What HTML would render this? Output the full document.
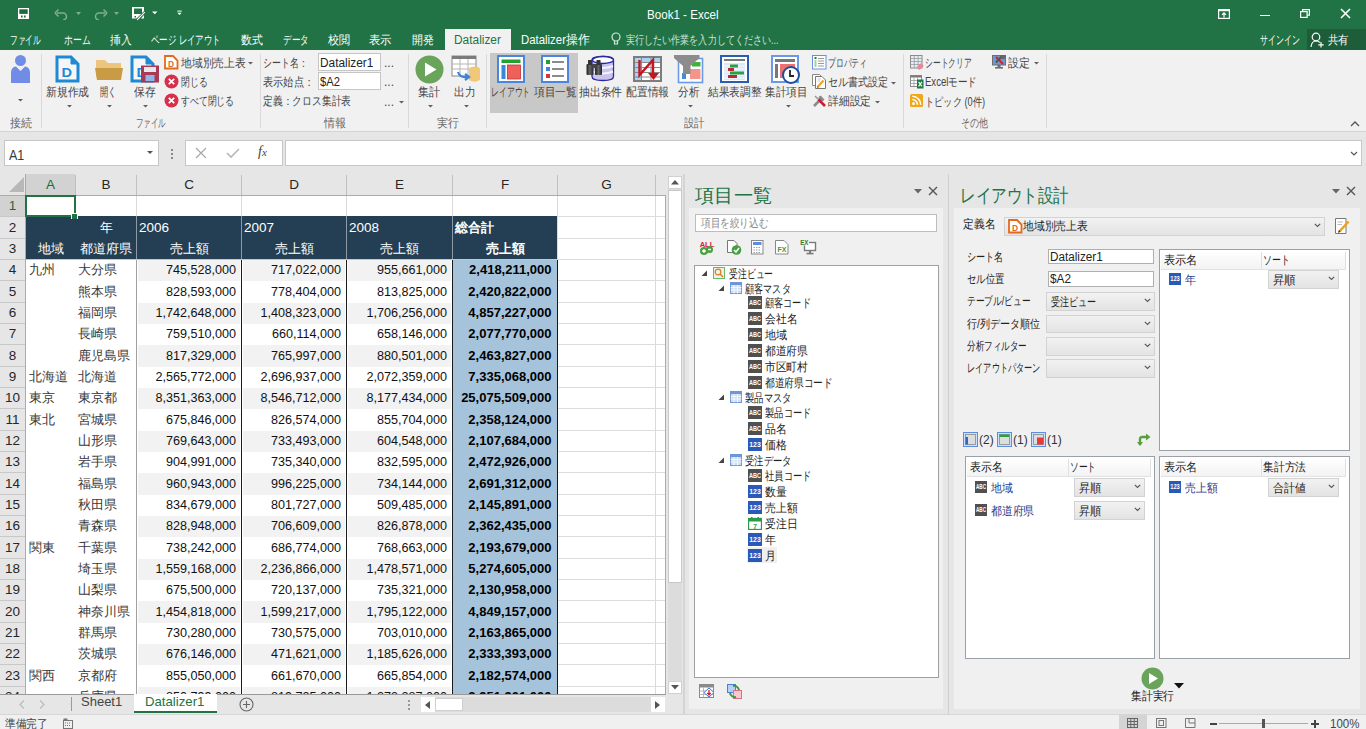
<!DOCTYPE html><html><head><meta charset="utf-8"><style>
html,body{margin:0;padding:0;width:1366px;height:729px;overflow:hidden;background:#f0f0f0;font-family:'Liberation Sans', sans-serif;}
.a{position:absolute;white-space:nowrap;}
</style></head><body>
<div class="a" style="left:0px;top:0px;width:1366px;height:50px;background:#217346"></div>
<svg class="a" style="left:17px;top:7px" width="13" height="13" viewBox="0 0 13 13"><rect x="1" y="1" width="11" height="11" fill="#fff"/><rect x="2.3" y="2.3" width="8.4" height="4.6" fill="#1d6b3d"/><rect x="4" y="8.5" width="1.6" height="2" fill="#1d6b3d"/><rect x="7" y="8.5" width="1.6" height="2" fill="#1d6b3d"/></svg>
<svg class="a" style="left:54px;top:8px" width="16" height="12" viewBox="0 0 16 12"><path d="M3 5 H9 A3.5 3.5 0 0 1 9 12" fill="none" stroke="#7fae91" stroke-width="1.5"/><path d="M1 5 L4.5 1.5 M1 5 L4.5 8.5" fill="none" stroke="#7fae91" stroke-width="1.5"/></svg>
<svg class="a" style="left:76px;top:12px" width="6" height="4" viewBox="0 0 6 4"><path d="M0 0 H5 L2.5 3z" fill="#7fae91"/></svg>
<svg class="a" style="left:92px;top:8px" width="16" height="12" viewBox="0 0 16 12"><path d="M13 5 H7 A3.5 3.5 0 0 0 7 12" fill="none" stroke="#7fae91" stroke-width="1.5"/><path d="M15 5 L11.5 1.5 M15 5 L11.5 8.5" fill="none" stroke="#7fae91" stroke-width="1.5"/></svg>
<svg class="a" style="left:114px;top:12px" width="6" height="4" viewBox="0 0 6 4"><path d="M0 0 H5 L2.5 3z" fill="#7fae91"/></svg>
<svg class="a" style="left:131px;top:6px" width="15" height="15" viewBox="0 0 15 15"><path d="M1 1 H13 V7 L8 12.5 H1 Z" fill="#fff"/><rect x="3" y="2.5" width="8" height="5.5" fill="#217346"/><rect x="3.5" y="10" width="1.5" height="1.5" fill="#217346"/><path d="M6 14 L14 6" stroke="#217346" stroke-width="2.6"/><path d="M6.2 13.8 L13.8 6.2" stroke="#fff" stroke-width="1.1"/><path d="M10 12.5 H13 V9" fill="#fff" stroke="#fff" stroke-width="0"/></svg>
<svg class="a" style="left:152px;top:11px" width="6" height="4" viewBox="0 0 6 4"><path d="M0 0.5 H5.5 L2.75 3.3z" fill="#fff"/></svg>
<svg class="a" style="left:177px;top:10px" width="5" height="6" viewBox="0 0 5 6"><rect x="0.3" y="0.6" width="4.4" height="1" fill="#fff"/><path d="M0.3 2.8 H4.7 L2.5 5z" fill="#fff"/></svg>
<div class="a" id="t1" style="left:646.5px;top:6.5px;line-height:16px;font-size:12.5px;color:#ffffff;font-weight:normal;transform:scaleX(0.9274);transform-origin:left center;">Book1 - Excel</div>
<svg class="a" style="left:1218px;top:9px" width="12" height="10" viewBox="0 0 12 10"><rect x="0.6" y="0.6" width="10.8" height="8.8" fill="none" stroke="#fff" stroke-width="1.2"/><rect x="0.6" y="0.6" width="10.8" height="1.6" fill="#fff"/><path d="M6 8.5 V4 M4 5.8 L6 3.8 L8 5.8" fill="none" stroke="#fff" stroke-width="1.2"/></svg>
<div class="a" style="left:1260px;top:14.5px;width:10px;height:1.5px;background:#fff"></div>
<svg class="a" style="left:1300px;top:9px" width="10" height="9" viewBox="0 0 10 9"><rect x="0.6" y="2.6" width="6.5" height="5.8" fill="none" stroke="#fff" stroke-width="1.2"/><path d="M2.6 2.6 V0.6 H9.4 V6.2 H7.1" fill="none" stroke="#fff" stroke-width="1.2"/></svg>
<svg class="a" style="left:1340px;top:8px" width="11" height="11" viewBox="0 0 11 11"><path d="M1 1 L10 10 M10 1 L1 10" stroke="#fff" stroke-width="1.6"/></svg>
<div class="a" id="t2" style="left:9.9px;top:32.0px;line-height:16px;font-size:12px;color:#ffffff;font-weight:normal;transform:scaleX(0.6383);transform-origin:left center;">ファイル</div>
<div class="a" id="t3" style="left:63.5px;top:32.0px;line-height:16px;font-size:12px;color:#ffffff;font-weight:normal;transform:scaleX(0.7343);transform-origin:left center;">ホーム</div>
<div class="a" id="t4" style="left:109.8px;top:32.0px;line-height:16px;font-size:12px;color:#ffffff;font-weight:normal;transform:scaleX(0.9000);transform-origin:left center;">挿入</div>
<div class="a" id="t5" style="left:151.0px;top:32.0px;line-height:16px;font-size:12px;color:#ffffff;font-weight:normal;transform:scaleX(0.7016);transform-origin:left center;">ページ レイアウト</div>
<div class="a" id="t6" style="left:240.5px;top:32.0px;line-height:16px;font-size:12px;color:#ffffff;font-weight:normal;transform:scaleX(0.9130);transform-origin:left center;">数式</div>
<div class="a" id="t7" style="left:282.5px;top:32.0px;line-height:16px;font-size:12px;color:#ffffff;font-weight:normal;transform:scaleX(0.7086);transform-origin:left center;">データ</div>
<div class="a" id="t8" style="left:327.5px;top:32.0px;line-height:16px;font-size:12px;color:#ffffff;font-weight:normal;transform:scaleX(0.9217);transform-origin:left center;">校閲</div>
<div class="a" id="t9" style="left:369.2px;top:32.0px;line-height:16px;font-size:12px;color:#ffffff;font-weight:normal;transform:scaleX(0.9391);transform-origin:left center;">表示</div>
<div class="a" id="t10" style="left:411.8px;top:32.0px;line-height:16px;font-size:12px;color:#ffffff;font-weight:normal;transform:scaleX(0.9174);transform-origin:left center;">開発</div>
<div class="a" style="left:445px;top:29px;width:66px;height:22px;background:#f1f1f1"></div>
<div class="a" id="t11" style="left:454px;top:32.0px;line-height:16px;font-size:12.5px;color:#217346;font-weight:normal;transform:scaleX(0.9518);transform-origin:left center;">Datalizer</div>
<div class="a" id="t12" style="left:521.2px;top:32.0px;line-height:16px;font-size:12.5px;color:#ffffff;font-weight:normal;transform:scaleX(0.9108);transform-origin:left center;">Datalizer操作</div>
<svg class="a" style="left:611px;top:32px" width="10" height="15" viewBox="0 0 10 15"><circle cx="5" cy="5" r="4" fill="none" stroke="#d8e6dd" stroke-width="1.2"/><path d="M3.5 9 V12 H6.5 V9" fill="none" stroke="#d8e6dd" stroke-width="1.2"/></svg>
<div class="a" id="t13" style="left:625.7px;top:32.0px;line-height:16px;font-size:12px;color:#cfe0d5;font-weight:normal;transform:scaleX(0.7552);transform-origin:left center;">実行したい作業を入力してください...</div>
<div class="a" id="t14" style="left:1259.5px;top:32.0px;line-height:16px;font-size:12px;color:#ffffff;font-weight:normal;transform:scaleX(0.6610);transform-origin:left center;">サインイン</div>
<div class="a" style="left:1307px;top:29px;width:59px;height:21px;background:#1d5d39"></div>
<svg class="a" style="left:1310px;top:32px" width="15" height="16" viewBox="0 0 15 16"><circle cx="6" cy="5" r="3.8" fill="none" stroke="#fff" stroke-width="1.2"/><path d="M1 15 C1.5 10.5 4 9 6 9 C8 9 9 9.5 10 10.5" fill="none" stroke="#fff" stroke-width="1.2"/><path d="M11 10 V15.5 M8.3 12.8 H13.7" stroke="#fff" stroke-width="1.2"/></svg>
<div class="a" id="t15" style="left:1327.5px;top:32.0px;line-height:16px;font-size:12px;color:#ffffff;font-weight:normal;transform:scaleX(0.8696);transform-origin:left center;">共有</div>
<div class="a" style="left:0px;top:50px;width:1366px;height:81px;background:#f1f1f1"></div>
<div class="a" style="left:0px;top:131px;width:1366px;height:1px;background:#d4d4d4"></div>
<div class="a" style="left:41px;top:54px;width:1px;height:74px;background:#dadada"></div>
<div class="a" style="left:260px;top:54px;width:1px;height:74px;background:#dadada"></div>
<div class="a" style="left:408px;top:54px;width:1px;height:74px;background:#dadada"></div>
<div class="a" style="left:486px;top:54px;width:1px;height:74px;background:#dadada"></div>
<div class="a" style="left:903px;top:54px;width:1px;height:74px;background:#dadada"></div>
<div class="a" style="left:1046px;top:54px;width:1px;height:74px;background:#dadada"></div>
<div class="a" id="t16" style="left:9.5px;top:116.0px;line-height:14px;font-size:11.5px;color:#666666;font-weight:normal;transform:scaleX(0.9174);transform-origin:left center;">接続</div>
<div class="a" id="t17" style="left:135.8px;top:116.0px;line-height:14px;font-size:11.5px;color:#666666;font-weight:normal;transform:scaleX(0.6213);transform-origin:left center;">ファイル</div>
<div class="a" id="t18" style="left:323.5px;top:116.0px;line-height:14px;font-size:11.5px;color:#666666;font-weight:normal;transform:scaleX(0.9217);transform-origin:left center;">情報</div>
<div class="a" id="t19" style="left:436.5px;top:116.0px;line-height:14px;font-size:11.5px;color:#666666;font-weight:normal;transform:scaleX(0.9087);transform-origin:left center;">実行</div>
<div class="a" id="t20" style="left:684.4px;top:116.0px;line-height:14px;font-size:11.5px;color:#666666;font-weight:normal;transform:scaleX(0.8696);transform-origin:left center;">設計</div>
<div class="a" id="t21" style="left:961.0px;top:116.0px;line-height:14px;font-size:11.5px;color:#666666;font-weight:normal;transform:scaleX(0.7514);transform-origin:left center;">その他</div>
<svg class="a" style="left:10px;top:54px" width="22" height="30" viewBox="0 0 22 30"><circle cx="10.5" cy="6.5" r="5.5" fill="#6f8de6"/><path d="M1 29 V19 Q1 13 6 12.5 L10.5 17 L15 12.5 Q20 13 20 19 V29 Z" fill="#6f8de6"/></svg>
<svg class="a" style="left:17.5px;top:98.5px" width="5" height="3" viewBox="0 0 5 3"><path d="M0 0 H5 L2.5 2.6z" fill="#606060"/></svg>
<svg class="a" style="left:55px;top:55px" width="25" height="28" viewBox="0 0 25 28"><path d="M2 2 H16 L23 9 V26 H2 Z" fill="#f6f6f6" stroke="#1e8ad6" stroke-width="3"/><path d="M16 2 V9 H23" fill="#1e8ad6" stroke="#1e8ad6" stroke-width="1"/><text x="6.5" y="21.5" textLength="10.5" lengthAdjust="spacingAndGlyphs" font-family="Liberation Sans" font-weight="bold" font-size="13" fill="#1e8ad6">D</text></svg>
<div class="a" id="t22" style="left:45.8px;top:85.4px;line-height:14px;font-size:12px;color:#444444;font-weight:normal;transform:scaleX(0.9000);transform-origin:left center;">新規作成</div>
<svg class="a" style="left:66.5px;top:104.5px" width="5" height="3" viewBox="0 0 5 3"><path d="M0 0 H5 L2.5 2.6z" fill="#606060"/></svg>
<svg class="a" style="left:95px;top:57px" width="28" height="24" viewBox="0 0 28 24"><path d="M1 3 H10 L13 6 H26 V20 H1 Z" fill="#ecc67e"/><path d="M0 11 H28 L26 23 H2 Z" fill="#c99b45"/></svg>
<div class="a" id="t23" style="left:100.1px;top:85.4px;line-height:14px;font-size:12px;color:#444444;font-weight:normal;transform:scaleX(0.6870);transform-origin:left center;">開く</div>
<svg class="a" style="left:106.5px;top:104.5px" width="5" height="3" viewBox="0 0 5 3"><path d="M0 0 H5 L2.5 2.6z" fill="#606060"/></svg>
<svg class="a" style="left:130px;top:55px" width="30" height="29" viewBox="0 0 30 29"><path d="M2 2 H16 L23 9 V26 H2 Z" fill="#f6f6f6" stroke="#1e8ad6" stroke-width="3"/><path d="M16 2 V9 H23" fill="#1e8ad6" stroke="#1e8ad6" stroke-width="1"/><text x="6.5" y="21.5" textLength="10.5" lengthAdjust="spacingAndGlyphs" font-family="Liberation Sans" font-weight="bold" font-size="13" fill="#1e8ad6">D</text><rect x="11" y="10.5" width="18" height="17" fill="#a83a55"/><rect x="14" y="12" width="12" height="5" fill="#e8e8e8"/><rect x="15.5" y="20" width="9" height="6" fill="#8fb4e8"/></svg>
<div class="a" id="t24" style="left:133.5px;top:85.4px;line-height:14px;font-size:12px;color:#444444;font-weight:normal;transform:scaleX(0.9000);transform-origin:left center;">保存</div>
<svg class="a" style="left:142.5px;top:104.5px" width="5" height="3" viewBox="0 0 5 3"><path d="M0 0 H5 L2.5 2.6z" fill="#606060"/></svg>
<svg class="a" style="left:164px;top:55px" width="15" height="15" viewBox="0 0 15 15"><path d="M1 1 H9 L13.5 5.5 V13.5 H1 Z" fill="#fff" stroke="#e06a1e" stroke-width="1.8"/><text x="7" y="11.5" text-anchor="middle" font-family="Liberation Sans" font-weight="bold" font-size="8.5" fill="#e06a1e">D</text></svg>
<div class="a" id="t25" style="left:180.5px;top:54.5px;line-height:16px;font-size:12px;color:#444444;font-weight:normal;transform:scaleX(0.8972);transform-origin:left center;">地域別売上表</div>
<svg class="a" style="left:247.5px;top:61.5px" width="5" height="3" viewBox="0 0 5 3"><path d="M0 0 H5 L2.5 2.6z" fill="#606060"/></svg>
<svg class="a" style="left:164px;top:74px" width="15" height="15" viewBox="0 0 15 15"><circle cx="7.5" cy="7.5" r="7" fill="#d8304a"/><path d="M4.8 4.8 L10.2 10.2 M10.2 4.8 L4.8 10.2" stroke="#fff" stroke-width="1.8"/></svg>
<div class="a" id="t26" style="left:180.5px;top:74.0px;line-height:16px;font-size:12px;color:#444444;font-weight:normal;transform:scaleX(0.7314);transform-origin:left center;">閉じる</div>
<svg class="a" style="left:164px;top:93px" width="15" height="15" viewBox="0 0 15 15"><circle cx="7.5" cy="7.5" r="7" fill="#d8304a"/><path d="M4.8 4.8 L10.2 10.2 M10.2 4.8 L4.8 10.2" stroke="#fff" stroke-width="1.8"/></svg>
<div class="a" id="t27" style="left:180.5px;top:93.0px;line-height:16px;font-size:12px;color:#444444;font-weight:normal;transform:scaleX(0.7366);transform-origin:left center;">すべて閉じる</div>
<div class="a" id="t28" style="left:263.2px;top:55.0px;line-height:16px;font-size:12px;color:#444444;font-weight:normal;transform:scaleX(0.7424);transform-origin:left center;">シート名：</div>
<div class="a" id="t29" style="left:263.2px;top:74.0px;line-height:16px;font-size:12px;color:#444444;font-weight:normal;transform:scaleX(0.8492);transform-origin:left center;">表示始点：</div>
<div class="a" id="t30" style="left:263.2px;top:93.0px;line-height:16px;font-size:12px;color:#444444;font-weight:normal;transform:scaleX(0.8159);transform-origin:left center;">定義：クロス集計表</div>
<div class="a" style="left:318px;top:53px;width:63px;height:18px;background:#fff;border:1px solid #c6c6c6;box-sizing:border-box"></div>
<div class="a" style="left:318px;top:72px;width:63px;height:18px;background:#fff;border:1px solid #c6c6c6;box-sizing:border-box"></div>
<div class="a" id="t31" style="left:319.9px;top:54.5px;line-height:16px;font-size:12.5px;color:#222;font-weight:normal;transform:scaleX(0.9479);transform-origin:left center;">Datalizer1</div>
<div class="a" id="t32" style="left:319.9px;top:73.5px;line-height:16px;font-size:12.5px;color:#222;font-weight:normal;transform:scaleX(0.8988);transform-origin:left center;">$A2</div>
<div class="a" id="t33" style="left:384px;top:57.0px;line-height:12px;font-size:12px;color:#444;font-weight:normal;">...</div>
<div class="a" id="t34" style="left:384px;top:76.0px;line-height:12px;font-size:12px;color:#444;font-weight:normal;">...</div>
<div class="a" id="t35" style="left:384px;top:96.0px;line-height:12px;font-size:12px;color:#444;font-weight:normal;">...</div>
<svg class="a" style="left:398.5px;top:100.5px" width="5" height="3" viewBox="0 0 5 3"><path d="M0 0 H5 L2.5 2.6z" fill="#606060"/></svg>
<svg class="a" style="left:415px;top:55px" width="29" height="29" viewBox="0 0 29 29"><circle cx="14.5" cy="14.5" r="14" fill="#6aa35a"/><path d="M10 7.5 L21.5 14.5 L10 21.5 Z" fill="#fff"/></svg>
<div class="a" id="t36" style="left:418.2px;top:85.4px;line-height:14px;font-size:12px;color:#444444;font-weight:normal;transform:scaleX(0.9348);transform-origin:left center;">集計</div>
<svg class="a" style="left:427.5px;top:104.5px" width="5" height="3" viewBox="0 0 5 3"><path d="M0 0 H5 L2.5 2.6z" fill="#606060"/></svg>
<svg class="a" style="left:451px;top:55px" width="30" height="29" viewBox="0 0 30 29"><rect x="1" y="1" width="24" height="20" fill="#fff" stroke="#8a8a8a" stroke-width="1"/><rect x="1" y="1" width="24" height="3" fill="#7a7a7a"/><path d="M1 9 H25 M1 14 H25 M9 4 V21 M17 4 V21" stroke="#b5b5b5" stroke-width="1"/><ellipse cx="23.5" cy="14" rx="5.5" ry="2.5" fill="#f0c878"/><path d="M18 14 V25 Q23.5 28.5 29 25 V14 Z" fill="#f0c878"/><path d="M7 17 Q9 23 16 22" fill="none" stroke="#3f84d2" stroke-width="2.2"/><path d="M14 19 L18 22 L14 25" fill="none" stroke="#3f84d2" stroke-width="2.2"/></svg>
<div class="a" id="t37" style="left:454.4px;top:85.4px;line-height:14px;font-size:12px;color:#444444;font-weight:normal;transform:scaleX(0.8913);transform-origin:left center;">出力</div>
<svg class="a" style="left:463.5px;top:104.5px" width="5" height="3" viewBox="0 0 5 3"><path d="M0 0 H5 L2.5 2.6z" fill="#606060"/></svg>
<div class="a" style="left:490px;top:53px;width:88px;height:60px;background:#c8c8c8"></div>
<svg class="a" style="left:497px;top:55px" width="28" height="28" viewBox="0 0 28 28"><rect x="1" y="1" width="26" height="26" fill="#fff" stroke="#4a86e0" stroke-width="2"/><rect x="4.5" y="4.5" width="19" height="3.5" fill="#22a031"/><rect x="4.5" y="10" width="4" height="14" fill="#3b86d8"/><rect x="10.5" y="10" width="13" height="14" fill="#f0605a"/><rect x="10.5" y="10" width="13" height="14" fill="none" stroke="#c23030" stroke-width="0.8"/></svg>
<div class="a" id="t38" style="left:490.5px;top:85.4px;line-height:14px;font-size:12px;color:#444444;font-weight:normal;transform:scaleX(0.6559);transform-origin:left center;">レイアウト</div>
<svg class="a" style="left:541px;top:55px" width="28" height="28" viewBox="0 0 28 28"><rect x="1" y="1" width="26" height="26" fill="#fff" stroke="#4a86e0" stroke-width="2"/><rect x="5" y="5" width="4" height="4" fill="#22a031"/><rect x="5" y="12" width="4" height="4" fill="#3b86d8"/><rect x="5" y="19" width="4" height="4" fill="#e0303a"/><path d="M11 7 H23 M11 14 H23 M11 21 H23" stroke="#666" stroke-width="1.4"/></svg>
<div class="a" id="t39" style="left:533.9px;top:85.4px;line-height:14px;font-size:12px;color:#444444;font-weight:normal;transform:scaleX(0.8915);transform-origin:left center;">項目一覧</div>
<svg class="a" style="left:584px;top:55px" width="31" height="28" viewBox="0 0 31 28"><defs><linearGradient id="bn" x1="0" x2="1"><stop offset="0" stop-color="#222"/><stop offset="0.5" stop-color="#666"/><stop offset="1" stop-color="#222"/></linearGradient></defs><path d="M8 5 Q8 1.5 19 1.5 Q29.5 1.5 29.5 5 V21.5 Q29.5 25.5 19 25.5 Q8 25.5 8 21.5 Z" fill="#c9c3ee" stroke="#2a2aa0" stroke-width="1.3"/><ellipse cx="19" cy="5" rx="10.5" ry="3.5" fill="#fff" stroke="#2a2aa0" stroke-width="1.3"/><path d="M8.5 11 Q19 15 29 11 M8.5 16.5 Q19 20.5 29 16.5" fill="none" stroke="#f4f2ff" stroke-width="2"/><rect x="2.5" y="9" width="7" height="11" rx="1" fill="url(#bn)"/><rect x="11" y="9" width="7" height="11" rx="1" fill="url(#bn)"/><rect x="4" y="5" width="4" height="5" fill="#333"/><rect x="12.5" y="5" width="4" height="5" fill="#333"/><rect x="8" y="9" width="4" height="4" fill="#444"/></svg>
<div class="a" id="t40" style="left:579.2px;top:85.4px;line-height:14px;font-size:12px;color:#444444;font-weight:normal;transform:scaleX(0.9000);transform-origin:left center;">抽出条件</div>
<svg class="a" style="left:633px;top:56px" width="29" height="26" viewBox="0 0 29 26"><rect x="1" y="1" width="27" height="24" fill="#fff" stroke="#7d7d7d" stroke-width="2"/><rect x="2" y="2" width="6" height="22" fill="#a8d4f4"/><rect x="2" y="2" width="25" height="4" fill="#a8d4f4"/><path d="M2 6.5 H27 M2 11.5 H27 M2 16.5 H27 M2 21 H27 M8.5 2 V24 M18 2 V24" stroke="#8a8a8a" stroke-width="1"/><path d="M6.5 4 V19 L20 4 V20" fill="none" stroke="#c8141e" stroke-width="2.4"/><path d="M15 17 L20.5 24 L26 17 Z" fill="#c8141e"/></svg>
<div class="a" id="t41" style="left:625.9px;top:85.4px;line-height:14px;font-size:12px;color:#444444;font-weight:normal;transform:scaleX(0.9000);transform-origin:left center;">配置情報</div>
<svg class="a" style="left:673px;top:54px" width="31" height="30" viewBox="0 0 31 30"><rect x="5.5" y="4.5" width="24" height="24" fill="#fff" stroke="#6a9ae6" stroke-width="1.6"/><rect x="17" y="15" width="10.5" height="10" fill="#f4948a"/><rect x="19" y="8" width="8.5" height="4.5" fill="#40b040"/><rect x="9" y="19" width="4" height="6" fill="#4a88d8"/><path d="M1 1 H26.5 V4 L17.5 12 V20 H10 V12 L1 4 Z" fill="#8c8c8c"/></svg>
<div class="a" id="t42" style="left:678.3px;top:85.4px;line-height:14px;font-size:12px;color:#444444;font-weight:normal;transform:scaleX(0.8870);transform-origin:left center;">分析</div>
<svg class="a" style="left:687.5px;top:104.5px" width="5" height="3" viewBox="0 0 5 3"><path d="M0 0 H5 L2.5 2.6z" fill="#606060"/></svg>
<svg class="a" style="left:720px;top:55px" width="29" height="28" viewBox="0 0 29 28"><rect x="1" y="1" width="27" height="26" fill="#fff" stroke="#2a5db0" stroke-width="2"/><rect x="4" y="4" width="21" height="2" fill="#777"/><rect x="4" y="8" width="21" height="17" fill="#dbe8f8"/><path d="M4 11 H25 M4 14 H25 M4 17 H25 M4 20 H25 M4 23 H25" stroke="#fff" stroke-width="0.8"/><rect x="10" y="9.5" width="8" height="3" fill="#2aa040"/><rect x="8" y="13" width="6" height="3" fill="#c0283a"/><rect x="10" y="16.5" width="14" height="3" fill="#2aa040"/><rect x="8" y="20" width="9" height="3" fill="#c0283a"/></svg>
<div class="a" id="t43" style="left:707.8px;top:85.4px;line-height:14px;font-size:12px;color:#444444;font-weight:normal;transform:scaleX(0.8864);transform-origin:left center;">結果表調整</div>
<svg class="a" style="left:771px;top:55px" width="30" height="29" viewBox="0 0 30 29"><rect x="1" y="1" width="26" height="26" fill="#fff" stroke="#6a9ae6" stroke-width="2"/><rect x="4" y="4" width="20" height="3" fill="#777"/><rect x="4" y="9" width="3" height="14" fill="#777"/><rect x="9" y="9" width="15" height="14" fill="#f07070"/><circle cx="20" cy="20" r="8" fill="#fff" stroke="#1f4e9c" stroke-width="2"/><path d="M19 15 V21 H23" fill="none" stroke="#222" stroke-width="1.8"/></svg>
<div class="a" id="t44" style="left:764.5px;top:85.4px;line-height:14px;font-size:12px;color:#444444;font-weight:normal;transform:scaleX(0.8872);transform-origin:left center;">集計項目</div>
<svg class="a" style="left:785.5px;top:104.5px" width="5" height="3" viewBox="0 0 5 3"><path d="M0 0 H5 L2.5 2.6z" fill="#606060"/></svg>
<svg class="a" style="left:812px;top:55px" width="15" height="15" viewBox="0 0 15 15"><rect x="0.5" y="0.5" width="13.5" height="13.5" fill="#fff" stroke="#6a8ee0" stroke-width="1"/><rect x="2.5" y="2" width="2" height="2" fill="#1a8a2a"/><rect x="2.5" y="5" width="2" height="7" fill="#a8d098"/><path d="M6 3.5 H12 M6 6 H12 M6 8.5 H12 M6 11 H12" stroke="#9a9a9a" stroke-width="1"/></svg>
<div class="a" id="t45" style="left:827.7px;top:54.5px;line-height:16px;font-size:12px;color:#444444;font-weight:normal;transform:scaleX(0.6508);transform-origin:left center;">プロパティ</div>
<svg class="a" style="left:812px;top:74px" width="15" height="16" viewBox="0 0 15 16"><path d="M0.5 0.5 H7.5 L9.5 2.5 V11.5 H0.5 Z" fill="#fff" stroke="#8a8a8a"/><path d="M3.5 2.5 H10 L13.5 6 V14.5 H3.5 Z" fill="#fff" stroke="#777"/><path d="M5.5 5 H9 M5.5 7 H8" stroke="#bbb" stroke-width="0.8"/><path d="M5.5 13 L11.5 6.5" stroke="#f4a020" stroke-width="2"/><path d="M5 13.8 L5.3 12 L6.8 13.3 Z" fill="#555"/></svg>
<div class="a" id="t46" style="left:827.7px;top:74.0px;line-height:16px;font-size:12px;color:#444444;font-weight:normal;transform:scaleX(0.8366);transform-origin:left center;">セル書式設定</div>
<svg class="a" style="left:890.5px;top:81.5px" width="5" height="3" viewBox="0 0 5 3"><path d="M0 0 H5 L2.5 2.6z" fill="#606060"/></svg>
<svg class="a" style="left:812px;top:93px" width="15" height="15" viewBox="0 0 15 15"><path d="M2 13 L10.5 4.5" stroke="#8a8a8a" stroke-width="2.6"/><path d="M9 2.5 A3 3 0 1 0 12.5 6 L11 5.5 L10 4.5 Z" fill="#8a8a8a"/><path d="M3 3 L6.5 6.5" stroke="#9a9a9a" stroke-width="1.6"/><path d="M6.5 6.5 L13 13" stroke="#c81e30" stroke-width="2.6"/></svg>
<div class="a" id="t47" style="left:827.7px;top:93.0px;line-height:16px;font-size:12px;color:#444444;font-weight:normal;transform:scaleX(0.9000);transform-origin:left center;">詳細設定</div>
<svg class="a" style="left:874.5px;top:100.5px" width="5" height="3" viewBox="0 0 5 3"><path d="M0 0 H5 L2.5 2.6z" fill="#606060"/></svg>
<svg class="a" style="left:910px;top:55px" width="14" height="15" viewBox="0 0 14 15"><rect x="0.5" y="0.5" width="11.5" height="12.5" fill="#e4eef8" stroke="#8a8a8a"/><path d="M0.5 3.5 H12 M0.5 6.5 H12 M0.5 9.5 H12 M4.3 0.5 V13 M8.1 0.5 V13" stroke="#9a9a9a" stroke-width="0.8"/><path d="M6.5 12.5 L11 8 L13.8 10.8 L9.3 15 Z" fill="#e8869a"/></svg>
<div class="a" id="t48" style="left:925.3px;top:54.9px;line-height:16px;font-size:12px;color:#444444;font-weight:normal;transform:scaleX(0.6465);transform-origin:left center;">シートクリア</div>
<svg class="a" style="left:910px;top:75px" width="15" height="14" viewBox="0 0 15 14"><rect x="0.5" y="0.5" width="11" height="11" fill="#fff" stroke="#8a8a8a"/><rect x="0.5" y="0.5" width="11" height="2" fill="#7a7a7a"/><path d="M0.5 5.5 H11.5 M0.5 8.5 H11.5 M4 2.5 V11.5 M7.5 2.5 V11.5" stroke="#9a9a9a" stroke-width="0.8"/><rect x="7" y="4.5" width="6.5" height="9" fill="#1e7a45"/><path d="M8.6 6.8 L11.9 11.3 M11.9 6.8 L8.6 11.3" stroke="#fff" stroke-width="1.1"/></svg>
<div class="a" id="t49" style="left:925.3px;top:73.6px;line-height:16px;font-size:12px;color:#444444;font-weight:normal;transform:scaleX(0.7957);transform-origin:left center;">Excelモード</div>
<svg class="a" style="left:910px;top:94px" width="13" height="13" viewBox="0 0 13 13"><rect x="0" y="0" width="13" height="13" rx="1.5" fill="#f0a818"/><circle cx="3.5" cy="9.5" r="1.5" fill="#fff"/><path d="M2.3 5.5 A5.2 5.2 0 0 1 7.5 10.7 M2.3 2.3 A8.4 8.4 0 0 1 10.7 10.7" fill="none" stroke="#fff" stroke-width="1.6"/></svg>
<div class="a" id="t50" style="left:925.3px;top:93.5px;line-height:16px;font-size:12px;color:#444444;font-weight:normal;transform:scaleX(0.7688);transform-origin:left center;">トピック (0件)</div>
<svg class="a" style="left:992px;top:55px" width="16" height="15" viewBox="0 0 16 15"><rect x="0.5" y="0.5" width="13" height="9.5" fill="#6a98d8" stroke="#6e6e6e"/><rect x="5.5" y="10" width="3" height="2" fill="#6e6e6e"/><rect x="3" y="12" width="8" height="1.6" fill="#6e6e6e"/><path d="M4 2 L11 9" stroke="#d82020" stroke-width="1.8"/><path d="M10 1 L4 7.5" stroke="#555" stroke-width="2"/><circle cx="11" cy="2" r="2.2" fill="#666"/></svg>
<div class="a" id="t51" style="left:1008.4px;top:54.9px;line-height:16px;font-size:12px;color:#444444;font-weight:normal;transform:scaleX(0.9174);transform-origin:left center;">設定</div>
<svg class="a" style="left:1033.5px;top:61.5px" width="5" height="3" viewBox="0 0 5 3"><path d="M0 0 H5 L2.5 2.6z" fill="#606060"/></svg>
<svg class="a" style="left:1349.5px;top:119.5px" width="10" height="7" viewBox="0 0 10 7"><path d="M1 6 L5 2 L9 6" fill="none" stroke="#555" stroke-width="1.3"/></svg>
<div class="a" style="left:0px;top:132px;width:1366px;height:42px;background:#e6e6e6"></div>
<div class="a" style="left:4px;top:140px;width:155px;height:26px;background:#fff;border:1px solid #c6c6c6;box-sizing:border-box"></div>
<div class="a" id="t52" style="left:9.3px;top:146.5px;line-height:16px;font-size:14px;color:#3a3a3a;font-weight:normal;transform:scaleX(0.8930);transform-origin:left center;">A1</div>
<svg class="a" style="left:147px;top:151px" width="6" height="4" viewBox="0 0 6 4"><path d="M0 0 H6 L3 3z" fill="#555"/></svg>
<div class="a" style="left:171px;top:149px;width:2px;height:2px;background:#888"></div>
<div class="a" style="left:171px;top:153px;width:2px;height:2px;background:#888"></div>
<div class="a" style="left:171px;top:157px;width:2px;height:2px;background:#888"></div>
<div class="a" style="left:185px;top:140px;width:98px;height:26px;background:#fff;border:1px solid #c6c6c6;box-sizing:border-box"></div>
<svg class="a" style="left:195px;top:147px" width="12" height="12" viewBox="0 0 12 12"><path d="M1 1 L11 11 M11 1 L1 11" stroke="#a8a8a8" stroke-width="1.2"/></svg>
<svg class="a" style="left:226px;top:147px" width="14" height="12" viewBox="0 0 14 12"><path d="M1 6 L5 10 L13 2" fill="none" stroke="#b8b8b8" stroke-width="1.6"/></svg>
<div class="a" style="left:258px;top:143px;line-height:18px;font-size:14px;font-family:'Liberation Serif',serif;font-style:italic;color:#444">f<span style="font-size:11px">x</span></div>
<div class="a" style="left:285px;top:140px;width:1077px;height:26px;background:#fff;border:1px solid #c6c6c6;box-sizing:border-box"></div>
<svg class="a" style="left:1350px;top:151px" width="8" height="5" viewBox="0 0 8 5"><path d="M1 1 L4 4 L7 1" fill="none" stroke="#555" stroke-width="1.2"/></svg>
<div class="a" style="left:0px;top:174px;width:684px;height:21px;background:#e6e6e6"></div>
<div class="a" style="left:0px;top:195px;width:25px;height:499px;background:#e6e6e6"></div>
<div class="a" style="left:26px;top:174px;width:49px;height:21px;background:#d2d2d2"></div>
<div class="a" style="left:0px;top:196px;width:25px;height:20px;background:#d2d2d2"></div>
<svg class="a" style="left:8px;top:176px" width="17" height="17" viewBox="0 0 17 17"><path d="M16 1 V16 H1 Z" fill="#b8b8b8"/></svg>
<div class="a" style="left:26px;top:196px;width:639px;height:498px;background:#fff"></div>
<div class="a" id="t53" style="left:20.5px;width:60px;text-align:center;top:176.5px;line-height:16px;font-size:13.5px;color:#1e6b3e;font-weight:normal;">A</div>
<div class="a" id="t54" style="left:76.0px;width:60px;text-align:center;top:176.5px;line-height:16px;font-size:13.5px;color:#262626;font-weight:normal;">B</div>
<div class="a" id="t55" style="left:159.0px;width:60px;text-align:center;top:176.5px;line-height:16px;font-size:13.5px;color:#262626;font-weight:normal;">C</div>
<div class="a" id="t56" style="left:264.0px;width:60px;text-align:center;top:176.5px;line-height:16px;font-size:13.5px;color:#262626;font-weight:normal;">D</div>
<div class="a" id="t57" style="left:369.5px;width:60px;text-align:center;top:176.5px;line-height:16px;font-size:13.5px;color:#262626;font-weight:normal;">E</div>
<div class="a" id="t58" style="left:475.0px;width:60px;text-align:center;top:176.5px;line-height:16px;font-size:13.5px;color:#262626;font-weight:normal;">F</div>
<div class="a" id="t59" style="left:576.5px;width:60px;text-align:center;top:176.5px;line-height:16px;font-size:13.5px;color:#262626;font-weight:normal;">G</div>
<div class="a" style="left:75px;top:175px;width:1px;height:20px;background:#c0c0c0"></div>
<div class="a" style="left:136px;top:175px;width:1px;height:20px;background:#c0c0c0"></div>
<div class="a" style="left:241px;top:175px;width:1px;height:20px;background:#c0c0c0"></div>
<div class="a" style="left:346px;top:175px;width:1px;height:20px;background:#c0c0c0"></div>
<div class="a" style="left:452px;top:175px;width:1px;height:20px;background:#c0c0c0"></div>
<div class="a" style="left:557px;top:175px;width:1px;height:20px;background:#c0c0c0"></div>
<div class="a" style="left:655px;top:175px;width:1px;height:20px;background:#c0c0c0"></div>
<div class="a" style="left:0px;top:195px;width:666px;height:1px;background:#ababab"></div>
<div class="a" style="left:25px;top:174px;width:1px;height:520px;background:#ababab"></div>
<div class="a" style="left:26px;top:216px;width:639px;height:1px;background:#dcdcdc"></div>
<div class="a" style="left:0px;top:216px;width:25px;height:1px;background:#c8c8c8"></div>
<div class="a" style="left:26px;top:238px;width:639px;height:1px;background:#dcdcdc"></div>
<div class="a" style="left:0px;top:238px;width:25px;height:1px;background:#c8c8c8"></div>
<div class="a" style="left:26px;top:259px;width:639px;height:1px;background:#dcdcdc"></div>
<div class="a" style="left:0px;top:259px;width:25px;height:1px;background:#c8c8c8"></div>
<div class="a" style="left:26px;top:280px;width:639px;height:1px;background:#dcdcdc"></div>
<div class="a" style="left:0px;top:280px;width:25px;height:1px;background:#c8c8c8"></div>
<div class="a" style="left:26px;top:302px;width:639px;height:1px;background:#dcdcdc"></div>
<div class="a" style="left:0px;top:302px;width:25px;height:1px;background:#c8c8c8"></div>
<div class="a" style="left:26px;top:323px;width:639px;height:1px;background:#dcdcdc"></div>
<div class="a" style="left:0px;top:323px;width:25px;height:1px;background:#c8c8c8"></div>
<div class="a" style="left:26px;top:344px;width:639px;height:1px;background:#dcdcdc"></div>
<div class="a" style="left:0px;top:344px;width:25px;height:1px;background:#c8c8c8"></div>
<div class="a" style="left:26px;top:366px;width:639px;height:1px;background:#dcdcdc"></div>
<div class="a" style="left:0px;top:366px;width:25px;height:1px;background:#c8c8c8"></div>
<div class="a" style="left:26px;top:387px;width:639px;height:1px;background:#dcdcdc"></div>
<div class="a" style="left:0px;top:387px;width:25px;height:1px;background:#c8c8c8"></div>
<div class="a" style="left:26px;top:408px;width:639px;height:1px;background:#dcdcdc"></div>
<div class="a" style="left:0px;top:408px;width:25px;height:1px;background:#c8c8c8"></div>
<div class="a" style="left:26px;top:430px;width:639px;height:1px;background:#dcdcdc"></div>
<div class="a" style="left:0px;top:430px;width:25px;height:1px;background:#c8c8c8"></div>
<div class="a" style="left:26px;top:451px;width:639px;height:1px;background:#dcdcdc"></div>
<div class="a" style="left:0px;top:451px;width:25px;height:1px;background:#c8c8c8"></div>
<div class="a" style="left:26px;top:472px;width:639px;height:1px;background:#dcdcdc"></div>
<div class="a" style="left:0px;top:472px;width:25px;height:1px;background:#c8c8c8"></div>
<div class="a" style="left:26px;top:494px;width:639px;height:1px;background:#dcdcdc"></div>
<div class="a" style="left:0px;top:494px;width:25px;height:1px;background:#c8c8c8"></div>
<div class="a" style="left:26px;top:515px;width:639px;height:1px;background:#dcdcdc"></div>
<div class="a" style="left:0px;top:515px;width:25px;height:1px;background:#c8c8c8"></div>
<div class="a" style="left:26px;top:536px;width:639px;height:1px;background:#dcdcdc"></div>
<div class="a" style="left:0px;top:536px;width:25px;height:1px;background:#c8c8c8"></div>
<div class="a" style="left:26px;top:558px;width:639px;height:1px;background:#dcdcdc"></div>
<div class="a" style="left:0px;top:558px;width:25px;height:1px;background:#c8c8c8"></div>
<div class="a" style="left:26px;top:579px;width:639px;height:1px;background:#dcdcdc"></div>
<div class="a" style="left:0px;top:579px;width:25px;height:1px;background:#c8c8c8"></div>
<div class="a" style="left:26px;top:600px;width:639px;height:1px;background:#dcdcdc"></div>
<div class="a" style="left:0px;top:600px;width:25px;height:1px;background:#c8c8c8"></div>
<div class="a" style="left:26px;top:622px;width:639px;height:1px;background:#dcdcdc"></div>
<div class="a" style="left:0px;top:622px;width:25px;height:1px;background:#c8c8c8"></div>
<div class="a" style="left:26px;top:643px;width:639px;height:1px;background:#dcdcdc"></div>
<div class="a" style="left:0px;top:643px;width:25px;height:1px;background:#c8c8c8"></div>
<div class="a" style="left:26px;top:664px;width:639px;height:1px;background:#dcdcdc"></div>
<div class="a" style="left:0px;top:664px;width:25px;height:1px;background:#c8c8c8"></div>
<div class="a" style="left:26px;top:686px;width:639px;height:1px;background:#dcdcdc"></div>
<div class="a" style="left:0px;top:686px;width:25px;height:1px;background:#c8c8c8"></div>
<div class="a" style="left:75px;top:196px;width:1px;height:498px;background:#dadada"></div>
<div class="a" style="left:136px;top:196px;width:1px;height:498px;background:#dadada"></div>
<div class="a" style="left:241px;top:196px;width:1px;height:498px;background:#dadada"></div>
<div class="a" style="left:346px;top:196px;width:1px;height:498px;background:#dadada"></div>
<div class="a" style="left:452px;top:196px;width:1px;height:498px;background:#dadada"></div>
<div class="a" style="left:557px;top:196px;width:1px;height:498px;background:#dadada"></div>
<div class="a" style="left:655px;top:196px;width:1px;height:498px;background:#dadada"></div>
<div class="a" id="t60" style="left:-0.5px;width:26px;text-align:center;top:198.0px;line-height:16px;font-size:13.5px;color:#1e6b3e;font-weight:normal;">1</div>
<div class="a" id="t61" style="left:-0.5px;width:26px;text-align:center;top:219.5px;line-height:16px;font-size:13.5px;color:#262626;font-weight:normal;">2</div>
<div class="a" id="t62" style="left:-0.5px;width:26px;text-align:center;top:241.0px;line-height:16px;font-size:13.5px;color:#262626;font-weight:normal;">3</div>
<div class="a" id="t63" style="left:-0.5px;width:26px;text-align:center;top:262.0px;line-height:16px;font-size:13.5px;color:#262626;font-weight:normal;">4</div>
<div class="a" id="t64" style="left:-0.5px;width:26px;text-align:center;top:283.5px;line-height:16px;font-size:13.5px;color:#262626;font-weight:normal;">5</div>
<div class="a" id="t65" style="left:-0.5px;width:26px;text-align:center;top:305.0px;line-height:16px;font-size:13.5px;color:#262626;font-weight:normal;">6</div>
<div class="a" id="t66" style="left:-0.5px;width:26px;text-align:center;top:326.0px;line-height:16px;font-size:13.5px;color:#262626;font-weight:normal;">7</div>
<div class="a" id="t67" style="left:-0.5px;width:26px;text-align:center;top:347.5px;line-height:16px;font-size:13.5px;color:#262626;font-weight:normal;">8</div>
<div class="a" id="t68" style="left:-0.5px;width:26px;text-align:center;top:369.0px;line-height:16px;font-size:13.5px;color:#262626;font-weight:normal;">9</div>
<div class="a" id="t69" style="left:-0.5px;width:26px;text-align:center;top:390.0px;line-height:16px;font-size:13.5px;color:#262626;font-weight:normal;">10</div>
<div class="a" id="t70" style="left:-0.5px;width:26px;text-align:center;top:411.5px;line-height:16px;font-size:13.5px;color:#262626;font-weight:normal;">11</div>
<div class="a" id="t71" style="left:-0.5px;width:26px;text-align:center;top:433.0px;line-height:16px;font-size:13.5px;color:#262626;font-weight:normal;">12</div>
<div class="a" id="t72" style="left:-0.5px;width:26px;text-align:center;top:454.0px;line-height:16px;font-size:13.5px;color:#262626;font-weight:normal;">13</div>
<div class="a" id="t73" style="left:-0.5px;width:26px;text-align:center;top:475.5px;line-height:16px;font-size:13.5px;color:#262626;font-weight:normal;">14</div>
<div class="a" id="t74" style="left:-0.5px;width:26px;text-align:center;top:497.0px;line-height:16px;font-size:13.5px;color:#262626;font-weight:normal;">15</div>
<div class="a" id="t75" style="left:-0.5px;width:26px;text-align:center;top:518.0px;line-height:16px;font-size:13.5px;color:#262626;font-weight:normal;">16</div>
<div class="a" id="t76" style="left:-0.5px;width:26px;text-align:center;top:539.5px;line-height:16px;font-size:13.5px;color:#262626;font-weight:normal;">17</div>
<div class="a" id="t77" style="left:-0.5px;width:26px;text-align:center;top:561.0px;line-height:16px;font-size:13.5px;color:#262626;font-weight:normal;">18</div>
<div class="a" id="t78" style="left:-0.5px;width:26px;text-align:center;top:582.0px;line-height:16px;font-size:13.5px;color:#262626;font-weight:normal;">19</div>
<div class="a" id="t79" style="left:-0.5px;width:26px;text-align:center;top:603.5px;line-height:16px;font-size:13.5px;color:#262626;font-weight:normal;">20</div>
<div class="a" id="t80" style="left:-0.5px;width:26px;text-align:center;top:625.0px;line-height:16px;font-size:13.5px;color:#262626;font-weight:normal;">21</div>
<div class="a" id="t81" style="left:-0.5px;width:26px;text-align:center;top:646.0px;line-height:16px;font-size:13.5px;color:#262626;font-weight:normal;">22</div>
<div class="a" id="t82" style="left:-0.5px;width:26px;text-align:center;top:667.5px;line-height:16px;font-size:13.5px;color:#262626;font-weight:normal;">23</div>
<div class="a" id="t83" style="left:-0.5px;width:26px;text-align:center;top:689.0px;line-height:16px;font-size:13.5px;color:#262626;font-weight:normal;">24</div>
<div class="a" style="left:26px;top:216px;width:531px;height:43px;background:#243f53"></div>
<div class="a" style="left:453px;top:260px;width:104px;height:434px;background:#a6c3dc"></div>
<div class="a" style="left:26px;top:260px;width:427px;height:434px;background:#fff"></div>
<div class="a" style="left:138px;top:260px;width:102px;height:21px;background:#f2f2f2"></div>
<div class="a" style="left:243px;top:260px;width:102px;height:21px;background:#f2f2f2"></div>
<div class="a" style="left:348px;top:260px;width:103px;height:21px;background:#f2f2f2"></div>
<div class="a" style="left:138px;top:303px;width:102px;height:21px;background:#f2f2f2"></div>
<div class="a" style="left:243px;top:303px;width:102px;height:21px;background:#f2f2f2"></div>
<div class="a" style="left:348px;top:303px;width:103px;height:21px;background:#f2f2f2"></div>
<div class="a" style="left:138px;top:345px;width:102px;height:22px;background:#f2f2f2"></div>
<div class="a" style="left:243px;top:345px;width:102px;height:22px;background:#f2f2f2"></div>
<div class="a" style="left:348px;top:345px;width:103px;height:22px;background:#f2f2f2"></div>
<div class="a" style="left:138px;top:388px;width:102px;height:21px;background:#f2f2f2"></div>
<div class="a" style="left:243px;top:388px;width:102px;height:21px;background:#f2f2f2"></div>
<div class="a" style="left:348px;top:388px;width:103px;height:21px;background:#f2f2f2"></div>
<div class="a" style="left:138px;top:431px;width:102px;height:21px;background:#f2f2f2"></div>
<div class="a" style="left:243px;top:431px;width:102px;height:21px;background:#f2f2f2"></div>
<div class="a" style="left:348px;top:431px;width:103px;height:21px;background:#f2f2f2"></div>
<div class="a" style="left:138px;top:473px;width:102px;height:22px;background:#f2f2f2"></div>
<div class="a" style="left:243px;top:473px;width:102px;height:22px;background:#f2f2f2"></div>
<div class="a" style="left:348px;top:473px;width:103px;height:22px;background:#f2f2f2"></div>
<div class="a" style="left:138px;top:516px;width:102px;height:21px;background:#f2f2f2"></div>
<div class="a" style="left:243px;top:516px;width:102px;height:21px;background:#f2f2f2"></div>
<div class="a" style="left:348px;top:516px;width:103px;height:21px;background:#f2f2f2"></div>
<div class="a" style="left:138px;top:559px;width:102px;height:21px;background:#f2f2f2"></div>
<div class="a" style="left:243px;top:559px;width:102px;height:21px;background:#f2f2f2"></div>
<div class="a" style="left:348px;top:559px;width:103px;height:21px;background:#f2f2f2"></div>
<div class="a" style="left:138px;top:601px;width:102px;height:22px;background:#f2f2f2"></div>
<div class="a" style="left:243px;top:601px;width:102px;height:22px;background:#f2f2f2"></div>
<div class="a" style="left:348px;top:601px;width:103px;height:22px;background:#f2f2f2"></div>
<div class="a" style="left:138px;top:644px;width:102px;height:21px;background:#f2f2f2"></div>
<div class="a" style="left:243px;top:644px;width:102px;height:21px;background:#f2f2f2"></div>
<div class="a" style="left:348px;top:644px;width:103px;height:21px;background:#f2f2f2"></div>
<div class="a" style="left:138px;top:687px;width:102px;height:8px;background:#f2f2f2"></div>
<div class="a" style="left:243px;top:687px;width:102px;height:8px;background:#f2f2f2"></div>
<div class="a" style="left:348px;top:687px;width:103px;height:8px;background:#f2f2f2"></div>
<div class="a" style="left:136px;top:216px;width:1px;height:43px;background:#8d9aa5"></div>
<div class="a" style="left:241px;top:216px;width:1px;height:43px;background:#8d9aa5"></div>
<div class="a" style="left:346px;top:216px;width:1px;height:43px;background:#8d9aa5"></div>
<div class="a" style="left:452px;top:216px;width:1px;height:43px;background:#8d9aa5"></div>
<div class="a" style="left:241px;top:260px;width:1px;height:434px;background:#1a1a1a"></div>
<div class="a" style="left:346px;top:260px;width:1px;height:434px;background:#1a1a1a"></div>
<div class="a" style="left:452px;top:260px;width:1px;height:434px;background:#1a1a1a"></div>
<div class="a" style="left:557px;top:260px;width:1px;height:434px;background:#1a1a1a"></div>
<div class="a" style="left:557px;top:216px;width:1px;height:44px;background:#dadada"></div>
<div class="a" style="left:136px;top:260px;width:1px;height:434px;background:#a0a0a0"></div>
<div class="a" style="left:26px;top:259px;width:531px;height:1px;background:#c8c8c8"></div>
<div class="a" id="t84" style="left:-87px;width:200px;text-align:right;top:219.5px;line-height:16px;font-size:12.7px;color:#fff;font-weight:normal;">年</div>
<div class="a" id="t85" style="left:139px;top:219.5px;line-height:16px;font-size:13.5px;color:#fff;font-weight:normal;">2006</div>
<div class="a" id="t86" style="left:244px;top:219.5px;line-height:16px;font-size:13.5px;color:#fff;font-weight:normal;">2007</div>
<div class="a" id="t87" style="left:349px;top:219.5px;line-height:16px;font-size:13.5px;color:#fff;font-weight:normal;">2008</div>
<div class="a" id="t88" style="left:455px;top:219.5px;line-height:16px;font-size:12.7px;color:#fff;font-weight:bold;">総合計</div>
<div class="a" id="t89" style="left:26.0px;width:50px;text-align:center;top:241.0px;line-height:16px;font-size:12.7px;color:#fff;font-weight:normal;">地域</div>
<div class="a" id="t90" style="left:76.0px;width:60px;text-align:center;top:241.0px;line-height:16px;font-size:12.7px;color:#fff;font-weight:normal;">都道府県</div>
<div class="a" id="t91" style="left:139.0px;width:100px;text-align:center;top:241.0px;line-height:16px;font-size:12.7px;color:#fff;font-weight:normal;">売上額</div>
<div class="a" id="t92" style="left:244.0px;width:100px;text-align:center;top:241.0px;line-height:16px;font-size:12.7px;color:#fff;font-weight:normal;">売上額</div>
<div class="a" id="t93" style="left:349.0px;width:100px;text-align:center;top:241.0px;line-height:16px;font-size:12.7px;color:#fff;font-weight:normal;">売上額</div>
<div class="a" id="t94" style="left:455.0px;width:100px;text-align:center;top:241.0px;line-height:16px;font-size:12.7px;color:#fff;font-weight:bold;">売上額</div>
<div class="a" id="t95" style="left:28.5px;top:262.0px;line-height:16px;font-size:12.7px;color:#383838;font-weight:normal;">九州</div>
<div class="a" id="t96" style="left:77.5px;top:262.0px;line-height:16px;font-size:12.7px;color:#383838;font-weight:normal;">大分県</div>
<div class="a" id="t97" style="left:36px;width:200px;text-align:right;top:262.0px;line-height:16px;font-size:12.6px;color:#111;font-weight:normal;">745,528,000</div>
<div class="a" id="t98" style="left:141px;width:200px;text-align:right;top:262.0px;line-height:16px;font-size:12.6px;color:#111;font-weight:normal;">717,022,000</div>
<div class="a" id="t99" style="left:247px;width:200px;text-align:right;top:262.0px;line-height:16px;font-size:12.6px;color:#111;font-weight:normal;">955,661,000</div>
<div class="a" id="t100" style="left:351.5px;width:200px;text-align:right;top:262.0px;line-height:16px;font-size:13px;color:#000;font-weight:bold;">2,418,211,000</div>
<div class="a" id="t101" style="left:77.5px;top:283.5px;line-height:16px;font-size:12.7px;color:#383838;font-weight:normal;">熊本県</div>
<div class="a" id="t102" style="left:36px;width:200px;text-align:right;top:283.5px;line-height:16px;font-size:12.6px;color:#111;font-weight:normal;">828,593,000</div>
<div class="a" id="t103" style="left:141px;width:200px;text-align:right;top:283.5px;line-height:16px;font-size:12.6px;color:#111;font-weight:normal;">778,404,000</div>
<div class="a" id="t104" style="left:247px;width:200px;text-align:right;top:283.5px;line-height:16px;font-size:12.6px;color:#111;font-weight:normal;">813,825,000</div>
<div class="a" id="t105" style="left:351.5px;width:200px;text-align:right;top:283.5px;line-height:16px;font-size:13px;color:#000;font-weight:bold;">2,420,822,000</div>
<div class="a" id="t106" style="left:77.5px;top:305.0px;line-height:16px;font-size:12.7px;color:#383838;font-weight:normal;">福岡県</div>
<div class="a" id="t107" style="left:36px;width:200px;text-align:right;top:305.0px;line-height:16px;font-size:12.6px;color:#111;font-weight:normal;">1,742,648,000</div>
<div class="a" id="t108" style="left:141px;width:200px;text-align:right;top:305.0px;line-height:16px;font-size:12.6px;color:#111;font-weight:normal;">1,408,323,000</div>
<div class="a" id="t109" style="left:247px;width:200px;text-align:right;top:305.0px;line-height:16px;font-size:12.6px;color:#111;font-weight:normal;">1,706,256,000</div>
<div class="a" id="t110" style="left:351.5px;width:200px;text-align:right;top:305.0px;line-height:16px;font-size:13px;color:#000;font-weight:bold;">4,857,227,000</div>
<div class="a" id="t111" style="left:77.5px;top:326.0px;line-height:16px;font-size:12.7px;color:#383838;font-weight:normal;">長崎県</div>
<div class="a" id="t112" style="left:36px;width:200px;text-align:right;top:326.0px;line-height:16px;font-size:12.6px;color:#111;font-weight:normal;">759,510,000</div>
<div class="a" id="t113" style="left:141px;width:200px;text-align:right;top:326.0px;line-height:16px;font-size:12.6px;color:#111;font-weight:normal;">660,114,000</div>
<div class="a" id="t114" style="left:247px;width:200px;text-align:right;top:326.0px;line-height:16px;font-size:12.6px;color:#111;font-weight:normal;">658,146,000</div>
<div class="a" id="t115" style="left:351.5px;width:200px;text-align:right;top:326.0px;line-height:16px;font-size:13px;color:#000;font-weight:bold;">2,077,770,000</div>
<div class="a" id="t116" style="left:77.5px;top:347.5px;line-height:16px;font-size:12.7px;color:#383838;font-weight:normal;">鹿児島県</div>
<div class="a" id="t117" style="left:36px;width:200px;text-align:right;top:347.5px;line-height:16px;font-size:12.6px;color:#111;font-weight:normal;">817,329,000</div>
<div class="a" id="t118" style="left:141px;width:200px;text-align:right;top:347.5px;line-height:16px;font-size:12.6px;color:#111;font-weight:normal;">765,997,000</div>
<div class="a" id="t119" style="left:247px;width:200px;text-align:right;top:347.5px;line-height:16px;font-size:12.6px;color:#111;font-weight:normal;">880,501,000</div>
<div class="a" id="t120" style="left:351.5px;width:200px;text-align:right;top:347.5px;line-height:16px;font-size:13px;color:#000;font-weight:bold;">2,463,827,000</div>
<div class="a" id="t121" style="left:28.5px;top:369.0px;line-height:16px;font-size:12.7px;color:#383838;font-weight:normal;">北海道</div>
<div class="a" id="t122" style="left:77.5px;top:369.0px;line-height:16px;font-size:12.7px;color:#383838;font-weight:normal;">北海道</div>
<div class="a" id="t123" style="left:36px;width:200px;text-align:right;top:369.0px;line-height:16px;font-size:12.6px;color:#111;font-weight:normal;">2,565,772,000</div>
<div class="a" id="t124" style="left:141px;width:200px;text-align:right;top:369.0px;line-height:16px;font-size:12.6px;color:#111;font-weight:normal;">2,696,937,000</div>
<div class="a" id="t125" style="left:247px;width:200px;text-align:right;top:369.0px;line-height:16px;font-size:12.6px;color:#111;font-weight:normal;">2,072,359,000</div>
<div class="a" id="t126" style="left:351.5px;width:200px;text-align:right;top:369.0px;line-height:16px;font-size:13px;color:#000;font-weight:bold;">7,335,068,000</div>
<div class="a" id="t127" style="left:28.5px;top:390.0px;line-height:16px;font-size:12.7px;color:#383838;font-weight:normal;">東京</div>
<div class="a" id="t128" style="left:77.5px;top:390.0px;line-height:16px;font-size:12.7px;color:#383838;font-weight:normal;">東京都</div>
<div class="a" id="t129" style="left:36px;width:200px;text-align:right;top:390.0px;line-height:16px;font-size:12.6px;color:#111;font-weight:normal;">8,351,363,000</div>
<div class="a" id="t130" style="left:141px;width:200px;text-align:right;top:390.0px;line-height:16px;font-size:12.6px;color:#111;font-weight:normal;">8,546,712,000</div>
<div class="a" id="t131" style="left:247px;width:200px;text-align:right;top:390.0px;line-height:16px;font-size:12.6px;color:#111;font-weight:normal;">8,177,434,000</div>
<div class="a" id="t132" style="left:351.5px;width:200px;text-align:right;top:390.0px;line-height:16px;font-size:13px;color:#000;font-weight:bold;">25,075,509,000</div>
<div class="a" id="t133" style="left:28.5px;top:411.5px;line-height:16px;font-size:12.7px;color:#383838;font-weight:normal;">東北</div>
<div class="a" id="t134" style="left:77.5px;top:411.5px;line-height:16px;font-size:12.7px;color:#383838;font-weight:normal;">宮城県</div>
<div class="a" id="t135" style="left:36px;width:200px;text-align:right;top:411.5px;line-height:16px;font-size:12.6px;color:#111;font-weight:normal;">675,846,000</div>
<div class="a" id="t136" style="left:141px;width:200px;text-align:right;top:411.5px;line-height:16px;font-size:12.6px;color:#111;font-weight:normal;">826,574,000</div>
<div class="a" id="t137" style="left:247px;width:200px;text-align:right;top:411.5px;line-height:16px;font-size:12.6px;color:#111;font-weight:normal;">855,704,000</div>
<div class="a" id="t138" style="left:351.5px;width:200px;text-align:right;top:411.5px;line-height:16px;font-size:13px;color:#000;font-weight:bold;">2,358,124,000</div>
<div class="a" id="t139" style="left:77.5px;top:433.0px;line-height:16px;font-size:12.7px;color:#383838;font-weight:normal;">山形県</div>
<div class="a" id="t140" style="left:36px;width:200px;text-align:right;top:433.0px;line-height:16px;font-size:12.6px;color:#111;font-weight:normal;">769,643,000</div>
<div class="a" id="t141" style="left:141px;width:200px;text-align:right;top:433.0px;line-height:16px;font-size:12.6px;color:#111;font-weight:normal;">733,493,000</div>
<div class="a" id="t142" style="left:247px;width:200px;text-align:right;top:433.0px;line-height:16px;font-size:12.6px;color:#111;font-weight:normal;">604,548,000</div>
<div class="a" id="t143" style="left:351.5px;width:200px;text-align:right;top:433.0px;line-height:16px;font-size:13px;color:#000;font-weight:bold;">2,107,684,000</div>
<div class="a" id="t144" style="left:77.5px;top:454.0px;line-height:16px;font-size:12.7px;color:#383838;font-weight:normal;">岩手県</div>
<div class="a" id="t145" style="left:36px;width:200px;text-align:right;top:454.0px;line-height:16px;font-size:12.6px;color:#111;font-weight:normal;">904,991,000</div>
<div class="a" id="t146" style="left:141px;width:200px;text-align:right;top:454.0px;line-height:16px;font-size:12.6px;color:#111;font-weight:normal;">735,340,000</div>
<div class="a" id="t147" style="left:247px;width:200px;text-align:right;top:454.0px;line-height:16px;font-size:12.6px;color:#111;font-weight:normal;">832,595,000</div>
<div class="a" id="t148" style="left:351.5px;width:200px;text-align:right;top:454.0px;line-height:16px;font-size:13px;color:#000;font-weight:bold;">2,472,926,000</div>
<div class="a" id="t149" style="left:77.5px;top:475.5px;line-height:16px;font-size:12.7px;color:#383838;font-weight:normal;">福島県</div>
<div class="a" id="t150" style="left:36px;width:200px;text-align:right;top:475.5px;line-height:16px;font-size:12.6px;color:#111;font-weight:normal;">960,943,000</div>
<div class="a" id="t151" style="left:141px;width:200px;text-align:right;top:475.5px;line-height:16px;font-size:12.6px;color:#111;font-weight:normal;">996,225,000</div>
<div class="a" id="t152" style="left:247px;width:200px;text-align:right;top:475.5px;line-height:16px;font-size:12.6px;color:#111;font-weight:normal;">734,144,000</div>
<div class="a" id="t153" style="left:351.5px;width:200px;text-align:right;top:475.5px;line-height:16px;font-size:13px;color:#000;font-weight:bold;">2,691,312,000</div>
<div class="a" id="t154" style="left:77.5px;top:497.0px;line-height:16px;font-size:12.7px;color:#383838;font-weight:normal;">秋田県</div>
<div class="a" id="t155" style="left:36px;width:200px;text-align:right;top:497.0px;line-height:16px;font-size:12.6px;color:#111;font-weight:normal;">834,679,000</div>
<div class="a" id="t156" style="left:141px;width:200px;text-align:right;top:497.0px;line-height:16px;font-size:12.6px;color:#111;font-weight:normal;">801,727,000</div>
<div class="a" id="t157" style="left:247px;width:200px;text-align:right;top:497.0px;line-height:16px;font-size:12.6px;color:#111;font-weight:normal;">509,485,000</div>
<div class="a" id="t158" style="left:351.5px;width:200px;text-align:right;top:497.0px;line-height:16px;font-size:13px;color:#000;font-weight:bold;">2,145,891,000</div>
<div class="a" id="t159" style="left:77.5px;top:518.0px;line-height:16px;font-size:12.7px;color:#383838;font-weight:normal;">青森県</div>
<div class="a" id="t160" style="left:36px;width:200px;text-align:right;top:518.0px;line-height:16px;font-size:12.6px;color:#111;font-weight:normal;">828,948,000</div>
<div class="a" id="t161" style="left:141px;width:200px;text-align:right;top:518.0px;line-height:16px;font-size:12.6px;color:#111;font-weight:normal;">706,609,000</div>
<div class="a" id="t162" style="left:247px;width:200px;text-align:right;top:518.0px;line-height:16px;font-size:12.6px;color:#111;font-weight:normal;">826,878,000</div>
<div class="a" id="t163" style="left:351.5px;width:200px;text-align:right;top:518.0px;line-height:16px;font-size:13px;color:#000;font-weight:bold;">2,362,435,000</div>
<div class="a" id="t164" style="left:28.5px;top:539.5px;line-height:16px;font-size:12.7px;color:#383838;font-weight:normal;">関東</div>
<div class="a" id="t165" style="left:77.5px;top:539.5px;line-height:16px;font-size:12.7px;color:#383838;font-weight:normal;">千葉県</div>
<div class="a" id="t166" style="left:36px;width:200px;text-align:right;top:539.5px;line-height:16px;font-size:12.6px;color:#111;font-weight:normal;">738,242,000</div>
<div class="a" id="t167" style="left:141px;width:200px;text-align:right;top:539.5px;line-height:16px;font-size:12.6px;color:#111;font-weight:normal;">686,774,000</div>
<div class="a" id="t168" style="left:247px;width:200px;text-align:right;top:539.5px;line-height:16px;font-size:12.6px;color:#111;font-weight:normal;">768,663,000</div>
<div class="a" id="t169" style="left:351.5px;width:200px;text-align:right;top:539.5px;line-height:16px;font-size:13px;color:#000;font-weight:bold;">2,193,679,000</div>
<div class="a" id="t170" style="left:77.5px;top:561.0px;line-height:16px;font-size:12.7px;color:#383838;font-weight:normal;">埼玉県</div>
<div class="a" id="t171" style="left:36px;width:200px;text-align:right;top:561.0px;line-height:16px;font-size:12.6px;color:#111;font-weight:normal;">1,559,168,000</div>
<div class="a" id="t172" style="left:141px;width:200px;text-align:right;top:561.0px;line-height:16px;font-size:12.6px;color:#111;font-weight:normal;">2,236,866,000</div>
<div class="a" id="t173" style="left:247px;width:200px;text-align:right;top:561.0px;line-height:16px;font-size:12.6px;color:#111;font-weight:normal;">1,478,571,000</div>
<div class="a" id="t174" style="left:351.5px;width:200px;text-align:right;top:561.0px;line-height:16px;font-size:13px;color:#000;font-weight:bold;">5,274,605,000</div>
<div class="a" id="t175" style="left:77.5px;top:582.0px;line-height:16px;font-size:12.7px;color:#383838;font-weight:normal;">山梨県</div>
<div class="a" id="t176" style="left:36px;width:200px;text-align:right;top:582.0px;line-height:16px;font-size:12.6px;color:#111;font-weight:normal;">675,500,000</div>
<div class="a" id="t177" style="left:141px;width:200px;text-align:right;top:582.0px;line-height:16px;font-size:12.6px;color:#111;font-weight:normal;">720,137,000</div>
<div class="a" id="t178" style="left:247px;width:200px;text-align:right;top:582.0px;line-height:16px;font-size:12.6px;color:#111;font-weight:normal;">735,321,000</div>
<div class="a" id="t179" style="left:351.5px;width:200px;text-align:right;top:582.0px;line-height:16px;font-size:13px;color:#000;font-weight:bold;">2,130,958,000</div>
<div class="a" id="t180" style="left:77.5px;top:603.5px;line-height:16px;font-size:12.7px;color:#383838;font-weight:normal;">神奈川県</div>
<div class="a" id="t181" style="left:36px;width:200px;text-align:right;top:603.5px;line-height:16px;font-size:12.6px;color:#111;font-weight:normal;">1,454,818,000</div>
<div class="a" id="t182" style="left:141px;width:200px;text-align:right;top:603.5px;line-height:16px;font-size:12.6px;color:#111;font-weight:normal;">1,599,217,000</div>
<div class="a" id="t183" style="left:247px;width:200px;text-align:right;top:603.5px;line-height:16px;font-size:12.6px;color:#111;font-weight:normal;">1,795,122,000</div>
<div class="a" id="t184" style="left:351.5px;width:200px;text-align:right;top:603.5px;line-height:16px;font-size:13px;color:#000;font-weight:bold;">4,849,157,000</div>
<div class="a" id="t185" style="left:77.5px;top:625.0px;line-height:16px;font-size:12.7px;color:#383838;font-weight:normal;">群馬県</div>
<div class="a" id="t186" style="left:36px;width:200px;text-align:right;top:625.0px;line-height:16px;font-size:12.6px;color:#111;font-weight:normal;">730,280,000</div>
<div class="a" id="t187" style="left:141px;width:200px;text-align:right;top:625.0px;line-height:16px;font-size:12.6px;color:#111;font-weight:normal;">730,575,000</div>
<div class="a" id="t188" style="left:247px;width:200px;text-align:right;top:625.0px;line-height:16px;font-size:12.6px;color:#111;font-weight:normal;">703,010,000</div>
<div class="a" id="t189" style="left:351.5px;width:200px;text-align:right;top:625.0px;line-height:16px;font-size:13px;color:#000;font-weight:bold;">2,163,865,000</div>
<div class="a" id="t190" style="left:77.5px;top:646.0px;line-height:16px;font-size:12.7px;color:#383838;font-weight:normal;">茨城県</div>
<div class="a" id="t191" style="left:36px;width:200px;text-align:right;top:646.0px;line-height:16px;font-size:12.6px;color:#111;font-weight:normal;">676,146,000</div>
<div class="a" id="t192" style="left:141px;width:200px;text-align:right;top:646.0px;line-height:16px;font-size:12.6px;color:#111;font-weight:normal;">471,621,000</div>
<div class="a" id="t193" style="left:247px;width:200px;text-align:right;top:646.0px;line-height:16px;font-size:12.6px;color:#111;font-weight:normal;">1,185,626,000</div>
<div class="a" id="t194" style="left:351.5px;width:200px;text-align:right;top:646.0px;line-height:16px;font-size:13px;color:#000;font-weight:bold;">2,333,393,000</div>
<div class="a" id="t195" style="left:28.5px;top:667.5px;line-height:16px;font-size:12.7px;color:#383838;font-weight:normal;">関西</div>
<div class="a" id="t196" style="left:77.5px;top:667.5px;line-height:16px;font-size:12.7px;color:#383838;font-weight:normal;">京都府</div>
<div class="a" id="t197" style="left:36px;width:200px;text-align:right;top:667.5px;line-height:16px;font-size:12.6px;color:#111;font-weight:normal;">855,050,000</div>
<div class="a" id="t198" style="left:141px;width:200px;text-align:right;top:667.5px;line-height:16px;font-size:12.6px;color:#111;font-weight:normal;">661,670,000</div>
<div class="a" id="t199" style="left:247px;width:200px;text-align:right;top:667.5px;line-height:16px;font-size:12.6px;color:#111;font-weight:normal;">665,854,000</div>
<div class="a" id="t200" style="left:351.5px;width:200px;text-align:right;top:667.5px;line-height:16px;font-size:13px;color:#000;font-weight:bold;">2,182,574,000</div>
<div class="a" id="t201" style="left:77.5px;top:689.0px;line-height:16px;font-size:12.7px;color:#383838;font-weight:normal;">兵庫県</div>
<div class="a" id="t202" style="left:36px;width:200px;text-align:right;top:689.0px;line-height:16px;font-size:12.6px;color:#111;font-weight:normal;">850,799,000</div>
<div class="a" id="t203" style="left:141px;width:200px;text-align:right;top:689.0px;line-height:16px;font-size:12.6px;color:#111;font-weight:normal;">819,725,000</div>
<div class="a" id="t204" style="left:247px;width:200px;text-align:right;top:689.0px;line-height:16px;font-size:12.6px;color:#111;font-weight:normal;">1,273,287,000</div>
<div class="a" id="t205" style="left:351.5px;width:200px;text-align:right;top:689.0px;line-height:16px;font-size:13px;color:#000;font-weight:bold;">2,951,901,000</div>
<div class="a" style="left:25px;top:195px;width:51px;height:22px;border:2px solid #217346;box-sizing:border-box"></div>
<div class="a" style="left:71px;top:213px;width:7px;height:6px;background:#fff"></div>
<div class="a" style="left:72px;top:214px;width:5px;height:5px;background:#217346"></div>
<div class="a" style="left:665px;top:196px;width:1px;height:498px;background:#ababab"></div>
<div class="a" style="left:0px;top:695px;width:684px;height:19px;background:#e6e6e6"></div>
<div class="a" style="left:0px;top:694px;width:666px;height:1px;background:#9a9a9a"></div>
<svg class="a" style="left:19px;top:700px" width="6" height="9" viewBox="0 0 6 9"><path d="M5 0.5 L1 4.5 L5 8.5" fill="none" stroke="#bcbcbc" stroke-width="1.2"/></svg>
<svg class="a" style="left:39px;top:700px" width="6" height="9" viewBox="0 0 6 9"><path d="M1 0.5 L5 4.5 L1 8.5" fill="none" stroke="#bcbcbc" stroke-width="1.2"/></svg>
<div class="a" style="left:71px;top:697px;width:1px;height:14px;background:#9a9a9a"></div>
<div class="a" id="t206" style="left:81px;top:694.0px;line-height:16px;font-size:13px;color:#444;font-weight:normal;">Sheet1</div>
<div class="a" style="left:134px;top:694px;width:83px;height:17px;background:#fff"></div>
<div class="a" style="left:134px;top:711px;width:83px;height:2px;background:#217346"></div>
<div class="a" id="t207" style="left:145px;top:694.0px;line-height:16px;font-size:13px;color:#217346;font-weight:normal;transform:scaleX(1.0151);transform-origin:left center;">Datalizer1</div>
<svg class="a" style="left:239px;top:697px" width="15" height="15" viewBox="0 0 15 15"><circle cx="7.5" cy="7.5" r="6.5" fill="none" stroke="#666" stroke-width="1.1"/><path d="M7.5 4 V11 M4 7.5 H11" stroke="#666" stroke-width="1.1"/></svg>
<div class="a" style="left:408px;top:700px;width:2px;height:2px;background:#999"></div>
<div class="a" style="left:408px;top:704px;width:2px;height:2px;background:#999"></div>
<div class="a" style="left:408px;top:708px;width:2px;height:2px;background:#999"></div>
<div class="a" style="left:421px;top:697px;width:244px;height:15px;background:#dcdcdc"></div>
<div class="a" style="left:421px;top:697px;width:14px;height:15px;background:#fff"></div>
<svg class="a" style="left:425px;top:701px" width="6" height="8" viewBox="0 0 6 8"><path d="M5 0 V8 L0 4 Z" fill="#555"/></svg>
<div class="a" style="left:435px;top:698px;width:28px;height:13px;background:#fff;border:1px solid #cfcfcf;box-sizing:border-box"></div>
<div class="a" style="left:651px;top:697px;width:14px;height:15px;background:#fff"></div>
<svg class="a" style="left:655px;top:701px" width="6" height="8" viewBox="0 0 6 8"><path d="M0 0 V8 L5 4 Z" fill="#555"/></svg>
<div class="a" style="left:666px;top:174px;width:18px;height:540px;background:#e6e6e6"></div>
<div class="a" style="left:668px;top:176px;width:14px;height:518px;background:#dcdcdc"></div>
<div class="a" style="left:668px;top:176px;width:14px;height:13px;background:#fff;border:1px solid #d0d0d0;box-sizing:border-box"></div>
<svg class="a" style="left:671px;top:180px" width="8" height="5" viewBox="0 0 8 5"><path d="M0 4.5 H8 L4 0 Z" fill="#555"/></svg>
<div class="a" style="left:668px;top:190px;width:14px;height:393px;background:#fff;border:1px solid #c8c8c8;box-sizing:border-box"></div>
<div class="a" style="left:668px;top:681px;width:14px;height:13px;background:#fff;border:1px solid #d0d0d0;box-sizing:border-box"></div>
<svg class="a" style="left:671px;top:685px" width="8" height="5" viewBox="0 0 8 5"><path d="M0 0 H8 L4 4.5 Z" fill="#555"/></svg>
<div class="a" style="left:683px;top:174px;width:2px;height:540px;background:#d4d4d4"></div>
<div class="a" style="left:685px;top:174px;width:264px;height:540px;background:#e6e6e6"></div>
<div class="a" style="left:948px;top:174px;width:1px;height:540px;background:#cfcfcf"></div>
<div class="a" id="t208" style="left:695px;top:184.0px;line-height:24px;font-size:19px;color:#217346;font-weight:normal;transform:scaleX(1.0133);transform-origin:left center;">項目一覧</div>
<svg class="a" style="left:914px;top:189px" width="8" height="5" viewBox="0 0 8 5"><path d="M0 0 H8 L4 4.5 Z" fill="#666"/></svg>
<svg class="a" style="left:928px;top:186px" width="10" height="10" viewBox="0 0 10 10"><path d="M1 1 L9 9 M9 1 L1 9" stroke="#555" stroke-width="1.4"/></svg>
<div class="a" style="left:689px;top:208px;width:254px;height:501px;background:#f0f0f0"></div>
<div class="a" style="left:695px;top:214px;width:242px;height:18px;background:#fff;border:1px solid #bdbdbd;box-sizing:border-box"></div>
<div class="a" id="t209" style="left:701px;top:216.0px;line-height:14px;font-size:11.5px;color:#8a8a8a;font-weight:normal;transform:scaleX(0.7988);transform-origin:left center;">項目を絞り込む</div>
<svg class="a" style="left:699px;top:240px" width="16" height="15" viewBox="0 0 16 15"><text x="8" y="7" text-anchor="middle" font-family="Liberation Sans" font-weight="bold" font-size="7.5" fill="#d8202a">ALL</text><circle cx="5" cy="11" r="4" fill="#4aa040"/><circle cx="10.5" cy="9.5" r="3.5" fill="#4aa040"/><path d="M3 11 H7 M5 9 V13 M9 9.5 H12" stroke="#fff" stroke-width="1.3"/></svg>
<svg class="a" style="left:727px;top:240px" width="15" height="15" viewBox="0 0 15 15"><path d="M0.5 0.5 H7 L10 3.5 V12.5 H0.5 Z" fill="#fff" stroke="#777" stroke-width="1"/><circle cx="9.5" cy="10" r="4.8" fill="#45a045"/><path d="M7 10 L9 12 L12 8" fill="none" stroke="#fff" stroke-width="1.5"/></svg>
<svg class="a" style="left:751px;top:240px" width="13" height="15" viewBox="0 0 13 15"><rect x="0.5" y="0.5" width="11.5" height="13.5" fill="#fff" stroke="#888"/><rect x="2" y="2" width="8.5" height="3" fill="#5b8ee0"/><path d="M2.5 7.5 H10 M2.5 10 H10 M2.5 12.5 H10" stroke="#999" stroke-width="0.9" stroke-dasharray="1.5 1"/></svg>
<svg class="a" style="left:775px;top:240px" width="14" height="15" viewBox="0 0 14 15"><path d="M0.5 0.5 H9 L13 4.5 V14 H0.5 Z" fill="#fff" stroke="#888"/><text x="7" y="11.5" text-anchor="middle" font-family="Liberation Sans" font-weight="bold" font-size="7" fill="#3a9a3a">FX</text></svg>
<svg class="a" style="left:800px;top:239px" width="17" height="16" viewBox="0 0 17 16"><rect x="4.5" y="3.5" width="11" height="8" fill="#fff" stroke="#7a7a7a" stroke-width="1.4"/><rect x="0" y="0" width="9" height="6.5" fill="#f0f0f0"/><text x="0.3" y="6" textLength="8" lengthAdjust="spacingAndGlyphs" font-family="Liberation Sans" font-weight="bold" font-size="7" fill="#2a7a3a">EX</text><rect x="9" y="11.5" width="2" height="2.5" fill="#7a7a7a"/><rect x="6.5" y="13.8" width="7" height="1.6" fill="#7a7a7a"/></svg>
<div class="a" style="left:694px;top:265px;width:245px;height:413px;background:#fff;border:1px solid #a0a0a0;box-sizing:border-box"></div>
<div class="a" style="left:747px;top:547px;width:30px;height:16px;background:#efefef"></div>
<svg class="a" style="left:701px;top:270px" width="7" height="7" viewBox="0 0 7 7"><path d="M6 0.5 V6 H0.5 Z" fill="#444"/></svg>
<svg class="a" style="left:713px;top:267px" width="12" height="12" viewBox="0 0 12 12"><rect x="0.5" y="0.5" width="11" height="11" fill="#e8f4e8" stroke="#6ab86a"/><circle cx="5" cy="5" r="2.8" fill="none" stroke="#e07a20" stroke-width="1.2"/><path d="M7 7 L10 10" stroke="#e07a20" stroke-width="1.4"/></svg>
<div class="a" id="t210" style="left:728.5px;top:266.5px;line-height:14px;font-size:12px;color:#222;font-weight:normal;transform:scaleX(0.7390);transform-origin:left center;">受注ビュー</div>
<svg class="a" style="left:718px;top:285px" width="7" height="7" viewBox="0 0 7 7"><path d="M6 0.5 V6 H0.5 Z" fill="#444"/></svg>
<svg class="a" style="left:730px;top:282px" width="12" height="12" viewBox="0 0 12 12"><rect x="0.5" y="0.5" width="11" height="11" fill="#cfe0f6" stroke="#6d96d6"/><rect x="0.5" y="0.5" width="11" height="2.5" fill="#6d96d6"/><path d="M0.5 5.5 H11.5 M0.5 8 H11.5 M4 3 V11.5 M7.5 3 V11.5" stroke="#fff" stroke-width="0.7"/></svg>
<div class="a" id="t211" style="left:744.8px;top:281.5px;line-height:14px;font-size:12px;color:#222;font-weight:normal;transform:scaleX(0.7627);transform-origin:left center;">顧客マスタ</div>
<svg class="a" style="left:748px;top:296px" width="14" height="13" viewBox="0 0 14 13"><rect x="0" y="0" width="14" height="13" fill="#505050"/><text x="1" y="8.8" textLength="12" lengthAdjust="spacingAndGlyphs" font-family="Liberation Sans" font-weight="bold" font-size="6.5" fill="#fff">ABC</text></svg>
<div class="a" id="t212" style="left:765.4px;top:295.5px;line-height:14px;font-size:12px;color:#222;font-weight:normal;transform:scaleX(0.7627);transform-origin:left center;">顧客コード</div>
<svg class="a" style="left:748px;top:312px" width="14" height="13" viewBox="0 0 14 13"><rect x="0" y="0" width="14" height="13" fill="#505050"/><text x="1" y="8.8" textLength="12" lengthAdjust="spacingAndGlyphs" font-family="Liberation Sans" font-weight="bold" font-size="6.5" fill="#fff">ABC</text></svg>
<div class="a" id="t213" style="left:765.4px;top:311.5px;line-height:14px;font-size:12px;color:#222;font-weight:normal;transform:scaleX(0.9000);transform-origin:left center;">会社名</div>
<svg class="a" style="left:748px;top:328px" width="14" height="13" viewBox="0 0 14 13"><rect x="0" y="0" width="14" height="13" fill="#505050"/><text x="1" y="8.8" textLength="12" lengthAdjust="spacingAndGlyphs" font-family="Liberation Sans" font-weight="bold" font-size="6.5" fill="#fff">ABC</text></svg>
<div class="a" id="t214" style="left:765.4px;top:327.5px;line-height:14px;font-size:12px;color:#222;font-weight:normal;transform:scaleX(0.9304);transform-origin:left center;">地域</div>
<svg class="a" style="left:748px;top:344px" width="14" height="13" viewBox="0 0 14 13"><rect x="0" y="0" width="14" height="13" fill="#505050"/><text x="1" y="8.8" textLength="12" lengthAdjust="spacingAndGlyphs" font-family="Liberation Sans" font-weight="bold" font-size="6.5" fill="#fff">ABC</text></svg>
<div class="a" id="t215" style="left:765.4px;top:343.5px;line-height:14px;font-size:12px;color:#222;font-weight:normal;transform:scaleX(0.8936);transform-origin:left center;">都道府県</div>
<svg class="a" style="left:748px;top:360px" width="14" height="13" viewBox="0 0 14 13"><rect x="0" y="0" width="14" height="13" fill="#505050"/><text x="1" y="8.8" textLength="12" lengthAdjust="spacingAndGlyphs" font-family="Liberation Sans" font-weight="bold" font-size="6.5" fill="#fff">ABC</text></svg>
<div class="a" id="t216" style="left:765.4px;top:359.5px;line-height:14px;font-size:12px;color:#222;font-weight:normal;transform:scaleX(0.8936);transform-origin:left center;">市区町村</div>
<svg class="a" style="left:748px;top:376px" width="14" height="13" viewBox="0 0 14 13"><rect x="0" y="0" width="14" height="13" fill="#505050"/><text x="1" y="8.8" textLength="12" lengthAdjust="spacingAndGlyphs" font-family="Liberation Sans" font-weight="bold" font-size="6.5" fill="#fff">ABC</text></svg>
<div class="a" id="t217" style="left:765.4px;top:375.5px;line-height:14px;font-size:12px;color:#222;font-weight:normal;transform:scaleX(0.8072);transform-origin:left center;">都道府県コード</div>
<svg class="a" style="left:718px;top:394px" width="7" height="7" viewBox="0 0 7 7"><path d="M6 0.5 V6 H0.5 Z" fill="#444"/></svg>
<svg class="a" style="left:730px;top:391px" width="12" height="12" viewBox="0 0 12 12"><rect x="0.5" y="0.5" width="11" height="11" fill="#cfe0f6" stroke="#6d96d6"/><rect x="0.5" y="0.5" width="11" height="2.5" fill="#6d96d6"/><path d="M0.5 5.5 H11.5 M0.5 8 H11.5 M4 3 V11.5 M7.5 3 V11.5" stroke="#fff" stroke-width="0.7"/></svg>
<div class="a" id="t218" style="left:744.8px;top:390.5px;line-height:14px;font-size:12px;color:#222;font-weight:normal;transform:scaleX(0.7797);transform-origin:left center;">製品マスタ</div>
<svg class="a" style="left:748px;top:406px" width="14" height="13" viewBox="0 0 14 13"><rect x="0" y="0" width="14" height="13" fill="#505050"/><text x="1" y="8.8" textLength="12" lengthAdjust="spacingAndGlyphs" font-family="Liberation Sans" font-weight="bold" font-size="6.5" fill="#fff">ABC</text></svg>
<div class="a" id="t219" style="left:765.4px;top:405.5px;line-height:14px;font-size:12px;color:#222;font-weight:normal;transform:scaleX(0.7729);transform-origin:left center;">製品コード</div>
<svg class="a" style="left:748px;top:422px" width="14" height="13" viewBox="0 0 14 13"><rect x="0" y="0" width="14" height="13" fill="#505050"/><text x="1" y="8.8" textLength="12" lengthAdjust="spacingAndGlyphs" font-family="Liberation Sans" font-weight="bold" font-size="6.5" fill="#fff">ABC</text></svg>
<div class="a" id="t220" style="left:765.4px;top:421.5px;line-height:14px;font-size:12px;color:#222;font-weight:normal;transform:scaleX(0.9130);transform-origin:left center;">品名</div>
<svg class="a" style="left:748px;top:438px" width="14" height="13" viewBox="0 0 14 13"><rect x="0" y="0" width="14" height="13" fill="#2a5ab8"/><text x="1.2" y="8.9" textLength="11.6" lengthAdjust="spacingAndGlyphs" font-family="Liberation Sans" font-weight="bold" font-size="7" fill="#fff">123</text></svg>
<div class="a" id="t221" style="left:765.4px;top:437.5px;line-height:14px;font-size:12px;color:#222;font-weight:normal;transform:scaleX(0.9130);transform-origin:left center;">価格</div>
<svg class="a" style="left:718px;top:457px" width="7" height="7" viewBox="0 0 7 7"><path d="M6 0.5 V6 H0.5 Z" fill="#444"/></svg>
<svg class="a" style="left:730px;top:454px" width="12" height="12" viewBox="0 0 12 12"><rect x="0.5" y="0.5" width="11" height="11" fill="#cfe0f6" stroke="#6d96d6"/><rect x="0.5" y="0.5" width="11" height="2.5" fill="#6d96d6"/><path d="M0.5 5.5 H11.5 M0.5 8 H11.5 M4 3 V11.5 M7.5 3 V11.5" stroke="#fff" stroke-width="0.7"/></svg>
<div class="a" id="t222" style="left:744.8px;top:453.5px;line-height:14px;font-size:12px;color:#222;font-weight:normal;transform:scaleX(0.7797);transform-origin:left center;">受注データ</div>
<svg class="a" style="left:748px;top:469px" width="14" height="13" viewBox="0 0 14 13"><rect x="0" y="0" width="14" height="13" fill="#505050"/><text x="1" y="8.8" textLength="12" lengthAdjust="spacingAndGlyphs" font-family="Liberation Sans" font-weight="bold" font-size="6.5" fill="#fff">ABC</text></svg>
<div class="a" id="t223" style="left:765.4px;top:468.5px;line-height:14px;font-size:12px;color:#222;font-weight:normal;transform:scaleX(0.7729);transform-origin:left center;">社員コード</div>
<svg class="a" style="left:748px;top:485px" width="14" height="13" viewBox="0 0 14 13"><rect x="0" y="0" width="14" height="13" fill="#2a5ab8"/><text x="1.2" y="8.9" textLength="11.6" lengthAdjust="spacingAndGlyphs" font-family="Liberation Sans" font-weight="bold" font-size="7" fill="#fff">123</text></svg>
<div class="a" id="t224" style="left:765.4px;top:484.5px;line-height:14px;font-size:12px;color:#222;font-weight:normal;transform:scaleX(0.9130);transform-origin:left center;">数量</div>
<svg class="a" style="left:748px;top:501px" width="14" height="13" viewBox="0 0 14 13"><rect x="0" y="0" width="14" height="13" fill="#2a5ab8"/><text x="1.2" y="8.9" textLength="11.6" lengthAdjust="spacingAndGlyphs" font-family="Liberation Sans" font-weight="bold" font-size="7" fill="#fff">123</text></svg>
<div class="a" id="t225" style="left:765.4px;top:500.5px;line-height:14px;font-size:12px;color:#222;font-weight:normal;transform:scaleX(0.9057);transform-origin:left center;">売上額</div>
<svg class="a" style="left:748px;top:517px" width="14" height="13" viewBox="0 0 14 13"><rect x="0.5" y="1.5" width="13" height="11" fill="#fff" stroke="#2a9a4a" stroke-width="1.3"/><rect x="0.5" y="1.5" width="13" height="3" fill="#2a9a4a"/><rect x="3" y="0" width="1.5" height="3" fill="#2a9a4a"/><rect x="9.5" y="0" width="1.5" height="3" fill="#2a9a4a"/><text x="7" y="11.5" text-anchor="middle" font-family="Liberation Sans" font-weight="bold" font-size="6.5" fill="#2a9a4a">7</text></svg>
<div class="a" id="t226" style="left:765.4px;top:516.5px;line-height:14px;font-size:12px;color:#222;font-weight:normal;transform:scaleX(0.9057);transform-origin:left center;">受注日</div>
<svg class="a" style="left:748px;top:533px" width="14" height="13" viewBox="0 0 14 13"><rect x="0" y="0" width="14" height="13" fill="#2a5ab8"/><text x="1.2" y="8.9" textLength="11.6" lengthAdjust="spacingAndGlyphs" font-family="Liberation Sans" font-weight="bold" font-size="7" fill="#fff">123</text></svg>
<div class="a" id="t227" style="left:765.4px;top:532.5px;line-height:14px;font-size:12px;color:#222;font-weight:normal;transform:scaleX(0.9091);transform-origin:left center;">年</div>
<svg class="a" style="left:748px;top:549px" width="14" height="13" viewBox="0 0 14 13"><rect x="0" y="0" width="14" height="13" fill="#2a5ab8"/><text x="1.2" y="8.9" textLength="11.6" lengthAdjust="spacingAndGlyphs" font-family="Liberation Sans" font-weight="bold" font-size="7" fill="#fff">123</text></svg>
<div class="a" id="t228" style="left:765.4px;top:548.5px;line-height:14px;font-size:12px;color:#222;font-weight:normal;transform:scaleX(0.9091);transform-origin:left center;">月</div>
<svg class="a" style="left:699px;top:684px" width="16" height="15" viewBox="0 0 16 15"><rect x="0.5" y="0.5" width="14" height="13" fill="#fff" stroke="#8a8a8a"/><rect x="0.5" y="0.5" width="14" height="3" fill="#8a8a8a"/><path d="M0.5 7 H14.5 M0.5 10.5 H14.5 M4.5 3.5 V13.5 M9.5 3.5 V13.5" stroke="#aaa" stroke-width="0.8"/><path d="M10 4 L15 8.5 L10 13 L5 8.5 Z" fill="#fff" stroke="#3a78d8" stroke-width="1"/><path d="M10 6 V10 M8.3 8.8 L10 11 L11.7 8.8" fill="none" stroke="#d82020" stroke-width="1.3"/></svg>
<svg class="a" style="left:727px;top:684px" width="15" height="15" viewBox="0 0 15 15"><rect x="0.5" y="0.5" width="8" height="8" fill="#b8d0f4" stroke="#4a80d8"/><rect x="6.5" y="6.5" width="8" height="8" fill="#f6c8d0" stroke="#e07080"/><path d="M3 9 A5 5 0 0 0 9 13" fill="none" stroke="#3a9a40" stroke-width="2"/><path d="M6 2 A5 5 0 0 1 12 6" fill="none" stroke="#3a9a40" stroke-width="2"/></svg>
<div class="a" style="left:949px;top:174px;width:417px;height:540px;background:#e6e6e6"></div>
<div class="a" id="t229" style="left:959.5px;top:184.0px;line-height:24px;font-size:19px;color:#217346;font-weight:normal;transform:scaleX(0.8182);transform-origin:left center;">レイアウト設計</div>
<svg class="a" style="left:1332px;top:189px" width="8" height="5" viewBox="0 0 8 5"><path d="M0 0 H8 L4 4.5 Z" fill="#666"/></svg>
<svg class="a" style="left:1346px;top:186px" width="10" height="10" viewBox="0 0 10 10"><path d="M1 1 L9 9 M9 1 L1 9" stroke="#555" stroke-width="1.4"/></svg>
<div class="a" style="left:954px;top:208px;width:406px;height:501px;background:#f0f0f0"></div>
<div class="a" id="t230" style="left:962.5px;top:217.0px;line-height:14px;font-size:12px;color:#222;font-weight:normal;transform:scaleX(0.9000);transform-origin:left center;">定義名</div>
<div class="a" style="left:1004px;top:217px;width:321px;height:19px;background:linear-gradient(#f2f2f2,#e3e3e3);border:1px solid #d2d2d2;box-sizing:border-box"></div>
<svg class="a" style="left:1313.5px;top:223.3px" width="7" height="5" viewBox="0 0 7 5"><path d="M0.8 0.8 L3.5 3.5 L6.2 0.8" fill="none" stroke="#555" stroke-width="1.1"/></svg>
<svg class="a" style="left:1008px;top:219px" width="15" height="15" viewBox="0 0 15 15"><path d="M1 1 H9 L13.5 5.5 V13.5 H1 Z" fill="#fff" stroke="#e06a1e" stroke-width="1.8"/><text x="7" y="11.5" text-anchor="middle" font-family="Liberation Sans" font-weight="bold" font-size="8.5" fill="#e06a1e">D</text></svg>
<div class="a" id="t231" style="left:1023px;top:219.0px;line-height:14px;font-size:12px;color:#222;font-weight:normal;transform:scaleX(0.8972);transform-origin:left center;">地域別売上表</div>
<svg class="a" style="left:1335px;top:218px" width="16" height="17" viewBox="0 0 16 17"><path d="M0.5 0.5 H11 V15.5 H0.5 Z" fill="#fff" stroke="#777"/><path d="M2.5 4 H8 M2.5 6.5 H7" stroke="#aaa" stroke-width="0.8"/><path d="M4 14 L13.5 3.5" stroke="#f0a020" stroke-width="2.6"/><path d="M3 15 L4 12 L5.5 13.5 Z" fill="#333"/></svg>
<div class="a" id="t232" style="left:966.5px;top:250.0px;line-height:14px;font-size:12px;color:#222;font-weight:normal;transform:scaleX(0.7617);transform-origin:left center;">シート名</div>
<div class="a" id="t233" style="left:966.5px;top:272.0px;line-height:14px;font-size:12px;color:#222;font-weight:normal;transform:scaleX(0.7787);transform-origin:left center;">セル位置</div>
<div class="a" id="t234" style="left:966.5px;top:294.0px;line-height:14px;font-size:12px;color:#222;font-weight:normal;transform:scaleX(0.7239);transform-origin:left center;">テーブル/ビュー</div>
<div class="a" id="t235" style="left:966.5px;top:317.0px;line-height:14px;font-size:12px;color:#222;font-weight:normal;transform:scaleX(0.8385);transform-origin:left center;">行/列データ順位</div>
<div class="a" id="t236" style="left:966.5px;top:339.0px;line-height:14px;font-size:12px;color:#222;font-weight:normal;transform:scaleX(0.7145);transform-origin:left center;">分析フィルター</div>
<div class="a" id="t237" style="left:966.5px;top:361.0px;line-height:14px;font-size:12px;color:#222;font-weight:normal;transform:scaleX(0.6822);transform-origin:left center;">レイアウトパターン</div>
<div class="a" style="left:1048px;top:249px;width:106px;height:15px;background:#fff;border:1px solid #b0b0b0;box-sizing:border-box"></div>
<div class="a" id="t238" style="left:1050.2px;top:249.5px;line-height:14px;font-size:12px;color:#222;font-weight:normal;transform:scaleX(0.9749);transform-origin:left center;">Datalizer1</div>
<div class="a" style="left:1048px;top:271px;width:106px;height:16px;background:#fff;border:1px solid #b0b0b0;box-sizing:border-box"></div>
<div class="a" id="t239" style="left:1050.2px;top:272.0px;line-height:14px;font-size:12px;color:#222;font-weight:normal;transform:scaleX(0.9823);transform-origin:left center;">$A2</div>
<div class="a" style="left:1046px;top:292px;width:109px;height:19px;background:linear-gradient(#f2f2f2,#e3e3e3);border:1px solid #d2d2d2;box-sizing:border-box"></div>
<svg class="a" style="left:1143.5px;top:298.3px" width="7" height="5" viewBox="0 0 7 5"><path d="M0.8 0.8 L3.5 3.5 L6.2 0.8" fill="none" stroke="#555" stroke-width="1.1"/></svg>
<div class="a" id="t240" style="left:1051px;top:294.5px;line-height:14px;font-size:12px;color:#222;font-weight:normal;transform:scaleX(0.7559);transform-origin:left center;">受注ビュー</div>
<div class="a" style="left:1046px;top:315px;width:109px;height:18px;background:linear-gradient(#f2f2f2,#e3e3e3);border:1px solid #d2d2d2;box-sizing:border-box"></div>
<svg class="a" style="left:1143.5px;top:320.8px" width="7" height="5" viewBox="0 0 7 5"><path d="M0.8 0.8 L3.5 3.5 L6.2 0.8" fill="none" stroke="#555" stroke-width="1.1"/></svg>
<div class="a" style="left:1046px;top:337px;width:109px;height:19px;background:linear-gradient(#f2f2f2,#e3e3e3);border:1px solid #d2d2d2;box-sizing:border-box"></div>
<svg class="a" style="left:1143.5px;top:343.3px" width="7" height="5" viewBox="0 0 7 5"><path d="M0.8 0.8 L3.5 3.5 L6.2 0.8" fill="none" stroke="#555" stroke-width="1.1"/></svg>
<div class="a" style="left:1046px;top:359px;width:109px;height:19px;background:linear-gradient(#f2f2f2,#e3e3e3);border:1px solid #d2d2d2;box-sizing:border-box"></div>
<svg class="a" style="left:1143.5px;top:365.3px" width="7" height="5" viewBox="0 0 7 5"><path d="M0.8 0.8 L3.5 3.5 L6.2 0.8" fill="none" stroke="#555" stroke-width="1.1"/></svg>
<div class="a" style="left:1159px;top:249px;width:191px;height:202px;background:#fff;border:1px solid #9aa0a8;box-sizing:border-box"></div>
<div class="a" style="left:1161px;top:251px;width:185px;height:18px;background:linear-gradient(#ffffff,#f3f3f3)"></div>
<div class="a" style="left:1161px;top:269px;width:185px;height:1px;background:#e2e2e2"></div>
<div class="a" style="left:1261px;top:252px;width:1px;height:17px;background:#e0e0e0"></div>
<div class="a" style="left:1345px;top:252px;width:1px;height:17px;background:#e0e0e0"></div>
<div class="a" id="t241" style="left:1163.5px;top:253.0px;line-height:14px;font-size:12px;color:#222;font-weight:normal;transform:scaleX(0.9314);transform-origin:left center;">表示名</div>
<div class="a" id="t242" style="left:1263px;top:253.0px;line-height:14px;font-size:12px;color:#222;font-weight:normal;transform:scaleX(0.7429);transform-origin:left center;">ソート</div>
<svg class="a" style="left:1169px;top:273px" width="12" height="12" viewBox="0 0 12 12"><rect x="0" y="0" width="12" height="12" fill="#2a5ab8"/><text x="1.2" y="8.4" textLength="9.6" lengthAdjust="spacingAndGlyphs" font-family="Liberation Sans" font-weight="bold" font-size="7" fill="#fff">123</text></svg>
<div class="a" id="t243" style="left:1184.5px;top:272.5px;line-height:14px;font-size:12px;color:#1f3a8a;font-weight:normal;transform:scaleX(0.9091);transform-origin:left center;">年</div>
<div class="a" style="left:1268px;top:270px;width:71px;height:19px;background:linear-gradient(#f2f2f2,#e3e3e3);border:1px solid #d2d2d2;box-sizing:border-box"></div>
<svg class="a" style="left:1327.5px;top:276.3px" width="7" height="5" viewBox="0 0 7 5"><path d="M0.8 0.8 L3.5 3.5 L6.2 0.8" fill="none" stroke="#555" stroke-width="1.1"/></svg>
<div class="a" id="t244" style="left:1273px;top:272.5px;line-height:14px;font-size:12px;color:#222;font-weight:normal;transform:scaleX(0.9565);transform-origin:left center;">昇順</div>
<svg class="a" style="left:963px;top:432px" width="15" height="15" viewBox="0 0 15 15"><rect x="0.5" y="0.5" width="14" height="14" fill="#cfe0f8" stroke="#5b8ee0"/><rect x="2.5" y="2.5" width="10" height="10" fill="#ddd" stroke="#888" stroke-width="0.8"/><rect x="2.5" y="5" width="2.5" height="7.5" fill="#2a6ad0"/></svg>
<div class="a" id="t245" style="left:979px;top:433.0px;line-height:14px;font-size:12px;color:#333;font-weight:normal;">(2)</div>
<svg class="a" style="left:997px;top:432px" width="15" height="15" viewBox="0 0 15 15"><rect x="0.5" y="0.5" width="14" height="14" fill="#cfe0f8" stroke="#5b8ee0"/><rect x="2.5" y="2.5" width="10" height="10" fill="#ddd" stroke="#888" stroke-width="0.8"/><rect x="2.5" y="2.5" width="10" height="2.5" fill="#2aa040"/></svg>
<div class="a" id="t246" style="left:1013px;top:433.0px;line-height:14px;font-size:12px;color:#333;font-weight:normal;">(1)</div>
<svg class="a" style="left:1031px;top:432px" width="15" height="15" viewBox="0 0 15 15"><rect x="0.5" y="0.5" width="14" height="14" fill="#cfe0f8" stroke="#5b8ee0"/><rect x="2.5" y="2.5" width="10" height="10" fill="#ddd" stroke="#888" stroke-width="0.8"/><rect x="6" y="5.5" width="6.5" height="7" fill="#e83a3a"/></svg>
<div class="a" id="t247" style="left:1047px;top:433.0px;line-height:14px;font-size:12px;color:#333;font-weight:normal;">(1)</div>
<svg class="a" style="left:1137px;top:432px" width="15" height="15" viewBox="0 0 15 15"><path d="M3 13 V7 Q3 5 5 5 H11" fill="none" stroke="#5aa040" stroke-width="2.4"/><path d="M9 1.5 L13.5 5 L9 8.5 Z" fill="#5aa040"/><path d="M0 10 L3 14 L6 10 Z" fill="#5aa040"/></svg>
<div class="a" style="left:965px;top:456px;width:190px;height:203px;background:#fff;border:1px solid #9aa0a8;box-sizing:border-box"></div>
<div class="a" style="left:967px;top:458px;width:184px;height:18px;background:linear-gradient(#ffffff,#f3f3f3)"></div>
<div class="a" style="left:967px;top:476px;width:184px;height:1px;background:#e2e2e2"></div>
<div class="a" style="left:1068px;top:459px;width:1px;height:17px;background:#e0e0e0"></div>
<div class="a" style="left:1150px;top:459px;width:1px;height:17px;background:#e0e0e0"></div>
<div class="a" id="t248" style="left:969.5px;top:460.0px;line-height:14px;font-size:12px;color:#222;font-weight:normal;transform:scaleX(0.9057);transform-origin:left center;">表示名</div>
<div class="a" id="t249" style="left:1070px;top:460.0px;line-height:14px;font-size:12px;color:#222;font-weight:normal;transform:scaleX(0.7286);transform-origin:left center;">ソート</div>
<svg class="a" style="left:975px;top:481px" width="12" height="12" viewBox="0 0 12 12"><rect x="0" y="0" width="12" height="12" fill="#505050"/><text x="1" y="8.3" textLength="10" lengthAdjust="spacingAndGlyphs" font-family="Liberation Sans" font-weight="bold" font-size="6.5" fill="#fff">ABC</text></svg>
<div class="a" id="t250" style="left:990.5px;top:480.5px;line-height:14px;font-size:12px;color:#1f3a8a;font-weight:normal;transform:scaleX(0.9130);transform-origin:left center;">地域</div>
<div class="a" style="left:1074px;top:478px;width:71px;height:19px;background:linear-gradient(#f2f2f2,#e3e3e3);border:1px solid #d2d2d2;box-sizing:border-box"></div>
<svg class="a" style="left:1133.5px;top:484.3px" width="7" height="5" viewBox="0 0 7 5"><path d="M0.8 0.8 L3.5 3.5 L6.2 0.8" fill="none" stroke="#555" stroke-width="1.1"/></svg>
<div class="a" id="t251" style="left:1079px;top:480.5px;line-height:14px;font-size:12px;color:#222;font-weight:normal;transform:scaleX(0.9348);transform-origin:left center;">昇順</div>
<svg class="a" style="left:975px;top:504px" width="12" height="12" viewBox="0 0 12 12"><rect x="0" y="0" width="12" height="12" fill="#505050"/><text x="1" y="8.3" textLength="10" lengthAdjust="spacingAndGlyphs" font-family="Liberation Sans" font-weight="bold" font-size="6.5" fill="#fff">ABC</text></svg>
<div class="a" id="t252" style="left:990.5px;top:503.5px;line-height:14px;font-size:12px;color:#1f3a8a;font-weight:normal;transform:scaleX(0.9021);transform-origin:left center;">都道府県</div>
<div class="a" style="left:1074px;top:501px;width:71px;height:19px;background:linear-gradient(#f2f2f2,#e3e3e3);border:1px solid #d2d2d2;box-sizing:border-box"></div>
<svg class="a" style="left:1133.5px;top:507.3px" width="7" height="5" viewBox="0 0 7 5"><path d="M0.8 0.8 L3.5 3.5 L6.2 0.8" fill="none" stroke="#555" stroke-width="1.1"/></svg>
<div class="a" id="t253" style="left:1079px;top:503.5px;line-height:14px;font-size:12px;color:#222;font-weight:normal;transform:scaleX(0.9348);transform-origin:left center;">昇順</div>
<div class="a" style="left:1159px;top:456px;width:191px;height:203px;background:#fff;border:1px solid #9aa0a8;box-sizing:border-box"></div>
<div class="a" style="left:1161px;top:458px;width:185px;height:18px;background:linear-gradient(#ffffff,#f3f3f3)"></div>
<div class="a" style="left:1161px;top:476px;width:185px;height:1px;background:#e2e2e2"></div>
<div class="a" style="left:1261px;top:459px;width:1px;height:17px;background:#e0e0e0"></div>
<div class="a" style="left:1345px;top:459px;width:1px;height:17px;background:#e0e0e0"></div>
<div class="a" id="t254" style="left:1163.5px;top:460.0px;line-height:14px;font-size:12px;color:#222;font-weight:normal;transform:scaleX(0.9314);transform-origin:left center;">表示名</div>
<div class="a" id="t255" style="left:1263px;top:460.0px;line-height:14px;font-size:12px;color:#222;font-weight:normal;transform:scaleX(0.9000);transform-origin:left center;">集計方法</div>
<svg class="a" style="left:1169px;top:481px" width="12" height="12" viewBox="0 0 12 12"><rect x="0" y="0" width="12" height="12" fill="#2a5ab8"/><text x="1.2" y="8.4" textLength="9.6" lengthAdjust="spacingAndGlyphs" font-family="Liberation Sans" font-weight="bold" font-size="7" fill="#fff">123</text></svg>
<div class="a" id="t256" style="left:1184.5px;top:480.5px;line-height:14px;font-size:12px;color:#1f3a8a;font-weight:normal;transform:scaleX(0.9057);transform-origin:left center;">売上額</div>
<div class="a" style="left:1268px;top:478px;width:71px;height:19px;background:linear-gradient(#f2f2f2,#e3e3e3);border:1px solid #d2d2d2;box-sizing:border-box"></div>
<svg class="a" style="left:1327.5px;top:484.3px" width="7" height="5" viewBox="0 0 7 5"><path d="M0.8 0.8 L3.5 3.5 L6.2 0.8" fill="none" stroke="#555" stroke-width="1.1"/></svg>
<div class="a" id="t257" style="left:1273px;top:480.5px;line-height:14px;font-size:12px;color:#222;font-weight:normal;transform:scaleX(0.9086);transform-origin:left center;">合計値</div>
<svg class="a" style="left:1141px;top:667px" width="23" height="23" viewBox="0 0 23 23"><circle cx="11.5" cy="11.5" r="11" fill="#6aa35a"/><path d="M8 6 L17 11.5 L8 17 Z" fill="#fff"/></svg>
<svg class="a" style="left:1174px;top:683px" width="11" height="6" viewBox="0 0 11 6"><path d="M0 0 H10 L5 5.5 Z" fill="#111"/></svg>
<div class="a" id="t258" style="left:1130.5px;top:689.0px;line-height:14px;font-size:12px;color:#222;font-weight:normal;transform:scaleX(0.9000);transform-origin:left center;">集計実行</div>
<div class="a" style="left:0px;top:714px;width:1366px;height:15px;background:#f0f0f0"></div>
<div class="a" style="left:0px;top:714px;width:1366px;height:1px;background:#d6d6d6"></div>
<div class="a" id="t259" style="left:4.5px;top:716.5px;line-height:14px;font-size:12px;color:#444;font-weight:normal;transform:scaleX(0.8936);transform-origin:left center;">準備完了</div>
<svg class="a" style="left:63px;top:718px" width="10" height="11" viewBox="0 0 10 11"><rect x="0.5" y="2.5" width="9" height="8" fill="none" stroke="#777"/><rect x="0.5" y="0.5" width="4" height="2" fill="#777"/><path d="M2 5 H8 M2 7.5 H8" stroke="#777" stroke-dasharray="1 1"/></svg>
<div class="a" style="left:1119px;top:715px;width:28px;height:14px;background:#d4d4d4"></div>
<svg class="a" style="left:1127px;top:718px" width="11" height="10" viewBox="0 0 11 10"><rect x="0.5" y="0.5" width="10" height="9" fill="none" stroke="#666"/><path d="M0.5 3.5 H10.5 M0.5 6.5 H10.5 M3.8 0.5 V9.5 M7.2 0.5 V9.5" stroke="#666"/></svg>
<svg class="a" style="left:1156px;top:718px" width="11" height="10" viewBox="0 0 11 10"><rect x="0.5" y="0.5" width="9.5" height="9" fill="none" stroke="#777"/><rect x="3" y="2.5" width="4.5" height="5" fill="none" stroke="#777"/></svg>
<svg class="a" style="left:1185px;top:718px" width="11" height="10" viewBox="0 0 11 10"><path d="M0.5 9.5 V0.5 H10 V9.5 Z M4 0.5 V5 H10" fill="none" stroke="#777"/></svg>
<div class="a" style="left:1209.5px;top:723px;width:7px;height:1.6px;background:#444"></div>
<div class="a" style="left:1219px;top:723px;width:89px;height:1px;background:#aaa"></div>
<div class="a" style="left:1261.5px;top:719px;width:3.5px;height:9px;background:#555"></div>
<div class="a" style="left:1311px;top:723px;width:8px;height:1.6px;background:#444"></div>
<div class="a" style="left:1314.2px;top:719.5px;width:1.6px;height:8px;background:#444"></div>
<div class="a" id="t260" style="left:1329.5px;top:716.5px;line-height:14px;font-size:12.5px;color:#444;font-weight:normal;transform:scaleX(0.9198);transform-origin:left center;">100%</div>
</body></html>
